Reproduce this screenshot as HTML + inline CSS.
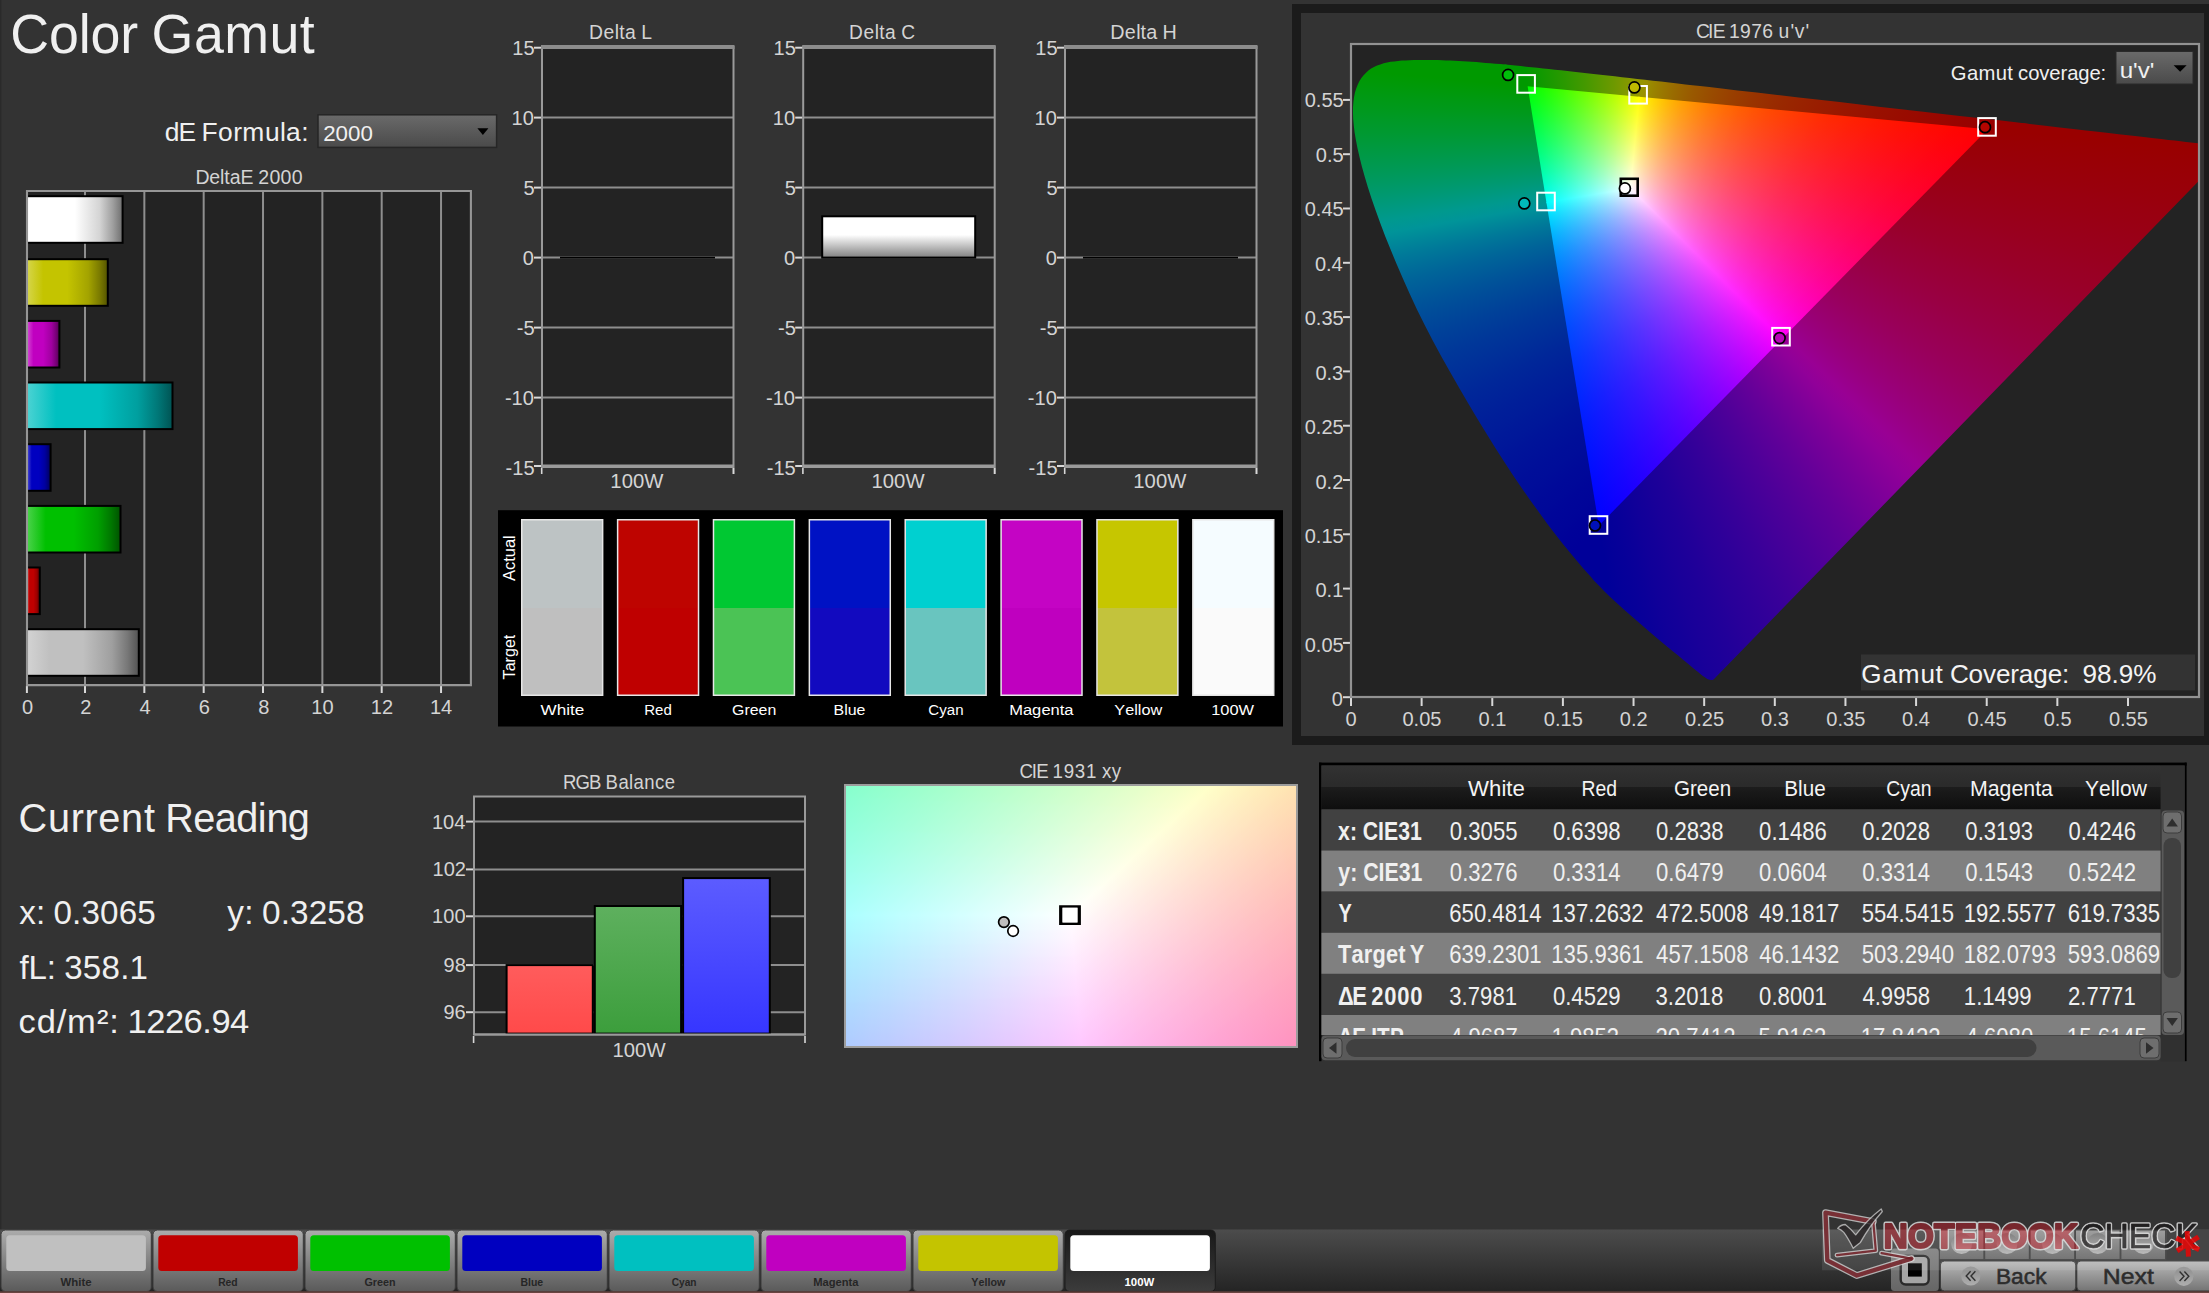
<!DOCTYPE html><html><head><meta charset="utf-8"><title>Color Gamut</title><style>
html,body{margin:0;padding:0;background:#333}
body{width:2209px;height:1293px;position:relative;overflow:hidden;font-family:"Liberation Sans", sans-serif}
svg{position:absolute;left:0;top:0}
svg text{font-family:"Liberation Sans", sans-serif;white-space:pre}
.gl{position:absolute;left:0;top:0;width:100%;height:100%}
</style></head><body>
<svg width="2209" height="1293" viewBox="0 0 2209 1293"><defs><linearGradient id="dd" x1="0" y1="0" x2="0" y2="1"><stop offset="0" stop-color="#6a6a6a"/><stop offset="1" stop-color="#4a4a4a"/></linearGradient><linearGradient id="hb0"><stop offset="0" stop-color="rgb(255,255,255)"/><stop offset="0.2" stop-color="rgb(255,255,255)"/><stop offset="0.5" stop-color="rgb(255,255,255)"/><stop offset="0.76" stop-color="rgb(212,212,212)"/><stop offset="0.9" stop-color="rgb(158,158,158)"/><stop offset="1" stop-color="rgb(110,110,110)"/></linearGradient><linearGradient id="hb1"><stop offset="0" stop-color="rgb(214,214,76)"/><stop offset="0.2" stop-color="rgb(196,196,0)"/><stop offset="0.5" stop-color="rgb(196,196,0)"/><stop offset="0.76" stop-color="rgb(163,163,0)"/><stop offset="0.9" stop-color="rgb(122,122,0)"/><stop offset="1" stop-color="rgb(84,84,0)"/></linearGradient><linearGradient id="hb2"><stop offset="0" stop-color="rgb(211,76,211)"/><stop offset="0.2" stop-color="rgb(192,0,192)"/><stop offset="0.5" stop-color="rgb(192,0,192)"/><stop offset="0.76" stop-color="rgb(159,0,159)"/><stop offset="0.9" stop-color="rgb(119,0,119)"/><stop offset="1" stop-color="rgb(83,0,83)"/></linearGradient><linearGradient id="hb3"><stop offset="0" stop-color="rgb(76,211,211)"/><stop offset="0.2" stop-color="rgb(0,192,192)"/><stop offset="0.5" stop-color="rgb(0,192,192)"/><stop offset="0.76" stop-color="rgb(0,159,159)"/><stop offset="0.9" stop-color="rgb(0,119,119)"/><stop offset="1" stop-color="rgb(0,83,83)"/></linearGradient><linearGradient id="hb4"><stop offset="0" stop-color="rgb(76,76,211)"/><stop offset="0.2" stop-color="rgb(0,0,192)"/><stop offset="0.5" stop-color="rgb(0,0,192)"/><stop offset="0.76" stop-color="rgb(0,0,159)"/><stop offset="0.9" stop-color="rgb(0,0,119)"/><stop offset="1" stop-color="rgb(0,0,83)"/></linearGradient><linearGradient id="hb5"><stop offset="0" stop-color="rgb(76,211,76)"/><stop offset="0.2" stop-color="rgb(0,192,0)"/><stop offset="0.5" stop-color="rgb(0,192,0)"/><stop offset="0.76" stop-color="rgb(0,159,0)"/><stop offset="0.9" stop-color="rgb(0,119,0)"/><stop offset="1" stop-color="rgb(0,83,0)"/></linearGradient><linearGradient id="hb6"><stop offset="0" stop-color="rgb(211,76,76)"/><stop offset="0.2" stop-color="rgb(192,0,0)"/><stop offset="0.5" stop-color="rgb(192,0,0)"/><stop offset="0.76" stop-color="rgb(159,0,0)"/><stop offset="0.9" stop-color="rgb(119,0,0)"/><stop offset="1" stop-color="rgb(83,0,0)"/></linearGradient><linearGradient id="hb7"><stop offset="0" stop-color="rgb(211,211,211)"/><stop offset="0.2" stop-color="rgb(192,192,192)"/><stop offset="0.5" stop-color="rgb(192,192,192)"/><stop offset="0.76" stop-color="rgb(159,159,159)"/><stop offset="0.9" stop-color="rgb(119,119,119)"/><stop offset="1" stop-color="rgb(83,83,83)"/></linearGradient><linearGradient id="vb" x1="0" y1="0" x2="0" y2="1"><stop offset="0" stop-color="#fff"/><stop offset="0.45" stop-color="#fff"/><stop offset="1" stop-color="#808080"/></linearGradient><linearGradient id="rb0" x1="0" y1="0" x2="0" y2="1"><stop offset="0" stop-color="rgb(255,92,92)"/><stop offset="1" stop-color="rgb(255,74,74)"/></linearGradient><linearGradient id="rb1" x1="0" y1="0" x2="0" y2="1"><stop offset="0" stop-color="rgb(94,176,94)"/><stop offset="1" stop-color="rgb(60,158,60)"/></linearGradient><linearGradient id="rb2" x1="0" y1="0" x2="0" y2="1"><stop offset="0" stop-color="rgb(92,92,255)"/><stop offset="1" stop-color="rgb(54,54,255)"/></linearGradient><linearGradient id="th" x1="0" y1="0" x2="0" y2="1"><stop offset="0" stop-color="#323232"/><stop offset="0.5" stop-color="#2a2a2a"/><stop offset="0.5" stop-color="#1c1c1c"/><stop offset="1" stop-color="#0e0e0e"/></linearGradient><linearGradient id="sbv"><stop offset="0" stop-color="#4a4a4a"/><stop offset="1" stop-color="#5c5c5c"/></linearGradient><linearGradient id="bs" x1="0" y1="0" x2="0" y2="1"><stop offset="0" stop-color="#4c4c4c"/><stop offset="1" stop-color="#232323"/></linearGradient><linearGradient id="bb" x1="0" y1="0" x2="0" y2="1"><stop offset="0" stop-color="#acacac"/><stop offset="1" stop-color="#5a5a5a"/></linearGradient><linearGradient id="bsel" x1="0" y1="0" x2="0" y2="1"><stop offset="0" stop-color="#181818"/><stop offset="1" stop-color="#3c3c3c"/></linearGradient><linearGradient id="sg" x1="0" y1="0" x2="0" y2="1"><stop offset="0" stop-color="#969696"/><stop offset="1" stop-color="#686868"/></linearGradient><linearGradient id="sgc" x1="0" y1="0" x2="0" y2="1"><stop offset="0" stop-color="#747474"/><stop offset="1" stop-color="#b4b4b4"/></linearGradient><linearGradient id="nb" x1="0" y1="0" x2="0" y2="1"><stop offset="0" stop-color="#bababa"/><stop offset="1" stop-color="#747474"/></linearGradient><linearGradient id="stp" x1="0" y1="0" x2="0" y2="1"><stop offset="0" stop-color="#808080"/><stop offset="1" stop-color="#666"/></linearGradient><linearGradient id="cg" x1="0" y1="0" x2="0" y2="1"><stop offset="0" stop-color="#8e8e8e"/><stop offset="1" stop-color="#aeaeae"/></linearGradient></defs>
<rect x="0.00" y="0.00" width="1.30" height="1230.00" fill="#2a2a2a"/>
<text transform="scale(0.9763 1)" x="10.6 50.2 80.6 92.8 123.3 141.5 155.2 198.6 229.6 276.0 307.0" y="53.0" font-size="55.02" fill="#f0f0f0">Color Gamut</text>
<text transform="scale(0.9907 1)" x="166.3 180.1 196.6 203.4 220.1 235.4 244.5 267.4 282.6 288.7 304.0" y="140.7" font-size="26.67" fill="#f0f0f0">dE Formula:</text>
<rect x="318.00" y="114.80" width="178.60" height="32.60" fill="url(#dd)" stroke="#262626" stroke-width="1.5"/>
<text transform="scale(0.9772 1)" x="330.7 343.4 356.2 368.9" y="140.7" font-size="22.85" fill="#f0f0f0">2000</text>
<path d="M477.4 128.3h11l-5.5 6.7z" fill="#000"/>
<rect x="27.00" y="191.00" width="443.50" height="494.00" fill="#232323"/>
<path d="M85.00 191.00L85.00 685.00" stroke="#8e8e8e" stroke-width="2.00"/>
<path d="M144.34 191.00L144.34 685.00" stroke="#8e8e8e" stroke-width="2.00"/>
<path d="M203.68 191.00L203.68 685.00" stroke="#8e8e8e" stroke-width="2.00"/>
<path d="M263.02 191.00L263.02 685.00" stroke="#8e8e8e" stroke-width="2.00"/>
<path d="M322.36 191.00L322.36 685.00" stroke="#8e8e8e" stroke-width="2.00"/>
<path d="M381.70 191.00L381.70 685.00" stroke="#8e8e8e" stroke-width="2.00"/>
<path d="M441.04 191.00L441.04 685.00" stroke="#8e8e8e" stroke-width="2.00"/>
<path d="M26.90 686.00L26.90 693.00" stroke="#d8d8d8" stroke-width="2.00"/>
<text transform="scale(0.9772 1)" x="22.6" y="714.2" font-size="20.52" fill="#d4d4d4">0</text>
<path d="M85.00 686.00L85.00 693.00" stroke="#d8d8d8" stroke-width="2.00"/>
<text transform="scale(0.9772 1)" x="82.1" y="714.2" font-size="20.52" fill="#d4d4d4">2</text>
<path d="M144.34 686.00L144.34 693.00" stroke="#d8d8d8" stroke-width="2.00"/>
<text transform="scale(0.9772 1)" x="142.8" y="714.2" font-size="20.52" fill="#d4d4d4">4</text>
<path d="M203.68 686.00L203.68 693.00" stroke="#d8d8d8" stroke-width="2.00"/>
<text transform="scale(0.9772 1)" x="203.4" y="714.2" font-size="20.52" fill="#d4d4d4">6</text>
<path d="M263.02 686.00L263.02 693.00" stroke="#d8d8d8" stroke-width="2.00"/>
<text transform="scale(0.9772 1)" x="264.3" y="714.2" font-size="20.52" fill="#d4d4d4">8</text>
<path d="M322.36 686.00L322.36 693.00" stroke="#d8d8d8" stroke-width="2.00"/>
<text transform="scale(0.9772 1)" x="318.6 330.0" y="714.2" font-size="20.52" fill="#d4d4d4">10</text>
<path d="M381.70 686.00L381.70 693.00" stroke="#d8d8d8" stroke-width="2.00"/>
<text transform="scale(0.9772 1)" x="379.5 390.9" y="714.2" font-size="20.52" fill="#d4d4d4">12</text>
<path d="M441.04 686.00L441.04 693.00" stroke="#d8d8d8" stroke-width="2.00"/>
<text transform="scale(0.9772 1)" x="440.0 451.4" y="714.2" font-size="20.52" fill="#d4d4d4">14</text>
<text transform="scale(0.9519 1)" x="205.3 219.9 231.2 235.7 241.3 252.6 266.1 271.3 283.1 294.8 306.5" y="183.6" font-size="20.52" fill="#d4d4d4">DeltaE 2000</text>
<rect x="27.00" y="196.20" width="95.60" height="46.60" fill="url(#hb0)" stroke="#000" stroke-width="2"/>
<rect x="27.00" y="259.20" width="80.80" height="46.60" fill="url(#hb1)" stroke="#000" stroke-width="2"/>
<rect x="27.00" y="320.90" width="32.40" height="46.60" fill="url(#hb2)" stroke="#000" stroke-width="2"/>
<rect x="27.00" y="382.50" width="145.50" height="46.60" fill="url(#hb3)" stroke="#000" stroke-width="2"/>
<rect x="27.00" y="444.20" width="23.60" height="46.60" fill="url(#hb4)" stroke="#000" stroke-width="2"/>
<rect x="27.00" y="505.90" width="93.50" height="46.60" fill="url(#hb5)" stroke="#000" stroke-width="2"/>
<rect x="27.00" y="567.50" width="12.80" height="46.60" fill="url(#hb6)" stroke="#000" stroke-width="2"/>
<rect x="27.00" y="629.20" width="111.80" height="46.60" fill="url(#hb7)" stroke="#000" stroke-width="2"/>
<path d="M27 191H470.9V685.1H27Z" fill="none" stroke="#969696" stroke-width="2.1"/>
<rect x="542.00" y="47.00" width="191.50" height="420.00" fill="#232323"/>
<path d="M542.00 117.60L733.50 117.60" stroke="#8e8e8e" stroke-width="2.00"/>
<path d="M542.00 187.60L733.50 187.60" stroke="#8e8e8e" stroke-width="2.00"/>
<path d="M542.00 257.60L733.50 257.60" stroke="#8e8e8e" stroke-width="2.00"/>
<path d="M542.00 327.60L733.50 327.60" stroke="#8e8e8e" stroke-width="2.00"/>
<path d="M542.00 397.60L733.50 397.60" stroke="#8e8e8e" stroke-width="2.00"/>
<path d="M542.0 47H733.5V467H542.0Z" fill="none" stroke="#9a9a9a" stroke-width="2"/>
<path d="M541.00 47.00L734.50 47.00" stroke="#8c8c8c" stroke-width="4.00"/>
<path d="M542.00 466.00L733.50 466.00" stroke="#9a9a9a" stroke-width="3.00"/>
<path d="M534.00 47.70L541.00 47.70" stroke="#d8d8d8" stroke-width="2.00"/>
<text transform="scale(0.9772 1)" x="524.3 535.7" y="55.0" font-size="20.52" fill="#d4d4d4">15</text>
<path d="M534.00 117.60L541.00 117.60" stroke="#d8d8d8" stroke-width="2.00"/>
<text transform="scale(0.9772 1)" x="523.5 534.9" y="125.2" font-size="20.52" fill="#d4d4d4">10</text>
<path d="M534.00 187.60L541.00 187.60" stroke="#d8d8d8" stroke-width="2.00"/>
<text transform="scale(0.9772 1)" x="535.7" y="195.2" font-size="20.52" fill="#d4d4d4">5</text>
<path d="M534.00 257.60L541.00 257.60" stroke="#d8d8d8" stroke-width="2.00"/>
<text transform="scale(0.9772 1)" x="534.9" y="265.2" font-size="20.52" fill="#d4d4d4">0</text>
<path d="M534.00 327.60L541.00 327.60" stroke="#d8d8d8" stroke-width="2.00"/>
<text transform="scale(0.9805 1)" x="527.0 533.8" y="335.2" font-size="20.52" fill="#d4d4d4">-5</text>
<path d="M534.00 397.60L541.00 397.60" stroke="#d8d8d8" stroke-width="2.00"/>
<text transform="scale(0.9792 1)" x="515.6 522.4 533.8" y="405.2" font-size="20.52" fill="#d4d4d4">-10</text>
<path d="M534.00 466.00L541.00 466.00" stroke="#d8d8d8" stroke-width="2.00"/>
<text transform="scale(0.9792 1)" x="516.3 523.1 534.5" y="475.0" font-size="20.52" fill="#d4d4d4">-15</text>
<path d="M541.70 468.00L541.70 474.00" stroke="#d8d8d8" stroke-width="1.60"/>
<path d="M733.50 468.00L733.50 474.00" stroke="#d8d8d8" stroke-width="2.00"/>
<text transform="scale(0.9893 1)" x="616.9 628.4 639.8 651.2" y="488.0" font-size="20.52" fill="#d4d4d4">100W</text>
<text transform="scale(0.9444 1)" x="623.7 639.1 651.0 655.8 661.7 673.6 678.9" y="39.2" font-size="20.52" fill="#d4d4d4">Delta L</text>
<path d="M560.00 257.60L715.00 257.60" stroke="#000" stroke-width="1.60"/>
<rect x="803.20" y="47.00" width="191.50" height="420.00" fill="#232323"/>
<path d="M803.20 117.60L994.70 117.60" stroke="#8e8e8e" stroke-width="2.00"/>
<path d="M803.20 187.60L994.70 187.60" stroke="#8e8e8e" stroke-width="2.00"/>
<path d="M803.20 257.60L994.70 257.60" stroke="#8e8e8e" stroke-width="2.00"/>
<path d="M803.20 327.60L994.70 327.60" stroke="#8e8e8e" stroke-width="2.00"/>
<path d="M803.20 397.60L994.70 397.60" stroke="#8e8e8e" stroke-width="2.00"/>
<path d="M803.2 47H994.7V467H803.2Z" fill="none" stroke="#9a9a9a" stroke-width="2"/>
<path d="M802.20 47.00L995.70 47.00" stroke="#8c8c8c" stroke-width="4.00"/>
<path d="M803.20 466.00L994.70 466.00" stroke="#9a9a9a" stroke-width="3.00"/>
<path d="M795.20 47.70L802.20 47.70" stroke="#d8d8d8" stroke-width="2.00"/>
<text transform="scale(0.9772 1)" x="791.5 803.0" y="55.0" font-size="20.52" fill="#d4d4d4">15</text>
<path d="M795.20 117.60L802.20 117.60" stroke="#d8d8d8" stroke-width="2.00"/>
<text transform="scale(0.9772 1)" x="790.8 802.2" y="125.2" font-size="20.52" fill="#d4d4d4">10</text>
<path d="M795.20 187.60L802.20 187.60" stroke="#d8d8d8" stroke-width="2.00"/>
<text transform="scale(0.9772 1)" x="803.0" y="195.2" font-size="20.52" fill="#d4d4d4">5</text>
<path d="M795.20 257.60L802.20 257.60" stroke="#d8d8d8" stroke-width="2.00"/>
<text transform="scale(0.9772 1)" x="802.2" y="265.2" font-size="20.52" fill="#d4d4d4">0</text>
<path d="M795.20 327.60L802.20 327.60" stroke="#d8d8d8" stroke-width="2.00"/>
<text transform="scale(0.9805 1)" x="793.4 800.3" y="335.2" font-size="20.52" fill="#d4d4d4">-5</text>
<path d="M795.20 397.60L802.20 397.60" stroke="#d8d8d8" stroke-width="2.00"/>
<text transform="scale(0.9792 1)" x="782.3 789.1 800.5" y="405.2" font-size="20.52" fill="#d4d4d4">-10</text>
<path d="M795.20 466.00L802.20 466.00" stroke="#d8d8d8" stroke-width="2.00"/>
<text transform="scale(0.9792 1)" x="783.0 789.9 801.3" y="475.0" font-size="20.52" fill="#d4d4d4">-15</text>
<path d="M802.90 468.00L802.90 474.00" stroke="#d8d8d8" stroke-width="1.60"/>
<path d="M994.70 468.00L994.70 474.00" stroke="#d8d8d8" stroke-width="2.00"/>
<text transform="scale(0.9893 1)" x="881.0 892.4 903.8 915.2" y="488.0" font-size="20.52" fill="#d4d4d4">100W</text>
<text transform="scale(0.9337 1)" x="909.3 924.9 937.0 941.8 947.8 959.8 965.2" y="39.2" font-size="20.52" fill="#d4d4d4">Delta C</text>
<rect x="822.2" y="216.3" width="153.0" height="41.3" fill="url(#vb)" stroke="#000" stroke-width="2"/>
<rect x="1065.00" y="47.00" width="191.50" height="420.00" fill="#232323"/>
<path d="M1065.00 117.60L1256.50 117.60" stroke="#8e8e8e" stroke-width="2.00"/>
<path d="M1065.00 187.60L1256.50 187.60" stroke="#8e8e8e" stroke-width="2.00"/>
<path d="M1065.00 257.60L1256.50 257.60" stroke="#8e8e8e" stroke-width="2.00"/>
<path d="M1065.00 327.60L1256.50 327.60" stroke="#8e8e8e" stroke-width="2.00"/>
<path d="M1065.00 397.60L1256.50 397.60" stroke="#8e8e8e" stroke-width="2.00"/>
<path d="M1065.0 47H1256.5V467H1065.0Z" fill="none" stroke="#9a9a9a" stroke-width="2"/>
<path d="M1064.00 47.00L1257.50 47.00" stroke="#8c8c8c" stroke-width="4.00"/>
<path d="M1065.00 466.00L1256.50 466.00" stroke="#9a9a9a" stroke-width="3.00"/>
<path d="M1057.00 47.70L1064.00 47.70" stroke="#d8d8d8" stroke-width="2.00"/>
<text transform="scale(0.9772 1)" x="1059.5 1070.9" y="55.0" font-size="20.52" fill="#d4d4d4">15</text>
<path d="M1057.00 117.60L1064.00 117.60" stroke="#d8d8d8" stroke-width="2.00"/>
<text transform="scale(0.9772 1)" x="1058.7 1070.1" y="125.2" font-size="20.52" fill="#d4d4d4">10</text>
<path d="M1057.00 187.60L1064.00 187.60" stroke="#d8d8d8" stroke-width="2.00"/>
<text transform="scale(0.9772 1)" x="1070.9" y="195.2" font-size="20.52" fill="#d4d4d4">5</text>
<path d="M1057.00 257.60L1064.00 257.60" stroke="#d8d8d8" stroke-width="2.00"/>
<text transform="scale(0.9772 1)" x="1070.1" y="265.2" font-size="20.52" fill="#d4d4d4">0</text>
<path d="M1057.00 327.60L1064.00 327.60" stroke="#d8d8d8" stroke-width="2.00"/>
<text transform="scale(0.9805 1)" x="1060.4 1067.3" y="335.2" font-size="20.52" fill="#d4d4d4">-5</text>
<path d="M1057.00 397.60L1064.00 397.60" stroke="#d8d8d8" stroke-width="2.00"/>
<text transform="scale(0.9792 1)" x="1049.7 1056.5 1067.9" y="405.2" font-size="20.52" fill="#d4d4d4">-10</text>
<path d="M1057.00 466.00L1064.00 466.00" stroke="#d8d8d8" stroke-width="2.00"/>
<text transform="scale(0.9792 1)" x="1050.4 1057.2 1068.7" y="475.0" font-size="20.52" fill="#d4d4d4">-15</text>
<path d="M1064.70 468.00L1064.70 474.00" stroke="#d8d8d8" stroke-width="1.60"/>
<path d="M1256.50 468.00L1256.50 474.00" stroke="#d8d8d8" stroke-width="2.00"/>
<text transform="scale(0.9893 1)" x="1145.6 1157.0 1168.4 1179.8" y="488.0" font-size="20.52" fill="#d4d4d4">100W</text>
<text transform="scale(0.9625 1)" x="1153.5 1168.7 1180.4 1185.0 1190.9 1202.5 1207.7" y="39.2" font-size="20.52" fill="#d4d4d4">Delta H</text>
<path d="M1083.00 257.60L1238.00 257.60" stroke="#000" stroke-width="1.60"/>
<rect x="498.00" y="510.20" width="785.00" height="216.30" fill="#000"/>
<rect x="521.00" y="519.00" width="82.40" height="177.00" fill="#e6e6e6"/>
<rect x="522.50" y="520.50" width="79.40" height="87.50" fill="#bdc3c4"/>
<rect x="522.50" y="608.00" width="79.40" height="86.50" fill="#bfbfbf"/>
<text transform="scale(1.1229 1)" x="481.4 495.8 504.3 507.7 511.9" y="715.0" font-size="15.29" fill="#ffffff">White</text>
<rect x="616.87" y="519.00" width="82.40" height="177.00" fill="#e6e6e6"/>
<rect x="618.37" y="520.50" width="79.40" height="87.50" fill="#be0400"/>
<rect x="618.37" y="608.00" width="79.40" height="86.50" fill="#bf0000"/>
<text transform="scale(0.9823 1)" x="655.9 666.9 675.4" y="715.0" font-size="15.29" fill="#ffffff">Red</text>
<rect x="712.74" y="519.00" width="82.40" height="177.00" fill="#e6e6e6"/>
<rect x="714.24" y="520.50" width="79.40" height="87.50" fill="#00c832"/>
<rect x="714.24" y="608.00" width="79.40" height="86.50" fill="#4bc355"/>
<text transform="scale(1.0414 1)" x="702.9 714.8 719.9 728.4 736.9" y="715.0" font-size="15.29" fill="#ffffff">Green</text>
<rect x="808.61" y="519.00" width="82.40" height="177.00" fill="#e6e6e6"/>
<rect x="810.11" y="520.50" width="79.40" height="87.50" fill="#0012c4"/>
<rect x="810.11" y="608.00" width="79.40" height="86.50" fill="#120abf"/>
<text transform="scale(1.0446 1)" x="797.9 808.1 811.5 820.0" y="715.0" font-size="15.29" fill="#ffffff">Blue</text>
<rect x="904.48" y="519.00" width="82.40" height="177.00" fill="#e6e6e6"/>
<rect x="905.98" y="520.50" width="79.40" height="87.50" fill="#00d0d0"/>
<rect x="905.98" y="608.00" width="79.40" height="86.50" fill="#69c5bf"/>
<text transform="scale(0.9847 1)" x="942.8 953.8 961.5 970.0" y="715.0" font-size="15.29" fill="#ffffff">Cyan</text>
<rect x="1000.35" y="519.00" width="82.40" height="177.00" fill="#e6e6e6"/>
<rect x="1001.85" y="520.50" width="79.40" height="87.50" fill="#c404c4"/>
<rect x="1001.85" y="608.00" width="79.40" height="86.50" fill="#bf00bf"/>
<text transform="scale(1.0802 1)" x="934.3 947.0 955.5 964.1 972.6 981.1 985.3" y="715.0" font-size="15.29" fill="#ffffff">Magenta</text>
<rect x="1096.22" y="519.00" width="82.40" height="177.00" fill="#e6e6e6"/>
<rect x="1097.72" y="520.50" width="79.40" height="87.50" fill="#c6c600"/>
<rect x="1097.72" y="608.00" width="79.40" height="86.50" fill="#c3c33c"/>
<text transform="scale(1.0645 1)" x="1046.8 1057.0 1065.5 1068.9 1072.3 1080.8" y="715.0" font-size="15.29" fill="#ffffff">Yellow</text>
<rect x="1192.09" y="519.00" width="82.40" height="177.00" fill="#e6e6e6"/>
<rect x="1193.59" y="520.50" width="79.40" height="87.50" fill="#f5fcff"/>
<rect x="1193.59" y="608.00" width="79.40" height="86.50" fill="#fafafa"/>
<text transform="scale(1.0738 1)" x="1127.9 1136.4 1144.9 1153.4" y="715.0" font-size="15.29" fill="#ffffff">100W</text>
<text transform="translate(515.2 558.2) rotate(-90)" x="-22.9" y="0" font-size="16.60" textLength="45.8" lengthAdjust="spacingAndGlyphs" fill="#fff">Actual</text>
<text transform="translate(515.2 657.0) rotate(-90)" x="-22.4" y="0" font-size="16.60" textLength="44.7" lengthAdjust="spacingAndGlyphs" fill="#fff">Target</text>
<text transform="scale(0.9892 1)" x="18.6 48.5 71.6 85.4 99.3 122.4 145.5 157.0 167.1 195.4 217.1 238.9 260.6 269.3 291.0" y="831.7" font-size="40.10" fill="#f0f0f0">Current Reading</text>
<text transform="scale(0.9785 1)" x="19.8 36.8 46.2 54.7 73.7 83.2 102.3 121.4 140.4" y="924.1" font-size="33.95" fill="#f0f0f0">x: 0.3065</text>
<text transform="scale(0.9836 1)" x="231.0 248.3 257.9 266.4 285.4 294.8 313.8 332.7 351.7" y="924.1" font-size="33.95" fill="#f0f0f0">y: 0.3258</text>
<text transform="scale(0.9746 1)" x="19.9 29.2 48.0 57.4 65.9 85.0 104.2 123.3 132.9" y="978.9" font-size="33.95" fill="#f0f0f0">fL: 358.1</text>
<text transform="scale(1.0168 1)" x="18.3 36.1 55.9 65.8 95.5 107.4 117.3 125.5 143.8 162.2 180.5 198.8 208.0 226.3" y="1033.3" font-size="33.95" fill="#f0f0f0">cd/m²: 1226.94</text>
<rect x="474.00" y="796.50" width="331.00" height="238.00" fill="#232323"/>
<path d="M474.00 1012.20L805.00 1012.20" stroke="#8e8e8e" stroke-width="2.00"/>
<path d="M466.00 1012.20L473.00 1012.20" stroke="#d8d8d8" stroke-width="2.00"/>
<text transform="scale(0.9772 1)" x="453.8 465.2" y="1019.2" font-size="20.52" fill="#d4d4d4">96</text>
<path d="M474.00 965.10L805.00 965.10" stroke="#8e8e8e" stroke-width="2.00"/>
<path d="M466.00 965.10L473.00 965.10" stroke="#d8d8d8" stroke-width="2.00"/>
<text transform="scale(0.9772 1)" x="453.9 465.3" y="972.1" font-size="20.52" fill="#d4d4d4">98</text>
<path d="M474.00 916.30L805.00 916.30" stroke="#8e8e8e" stroke-width="2.00"/>
<path d="M466.00 916.30L473.00 916.30" stroke="#d8d8d8" stroke-width="2.00"/>
<text transform="scale(0.9772 1)" x="442.2 453.6 465.0" y="923.3" font-size="20.52" fill="#d4d4d4">100</text>
<path d="M474.00 869.40L805.00 869.40" stroke="#8e8e8e" stroke-width="2.00"/>
<path d="M466.00 869.40L473.00 869.40" stroke="#d8d8d8" stroke-width="2.00"/>
<text transform="scale(0.9772 1)" x="442.6 454.0 465.4" y="876.4" font-size="20.52" fill="#d4d4d4">102</text>
<path d="M474.00 821.60L805.00 821.60" stroke="#8e8e8e" stroke-width="2.00"/>
<path d="M466.00 821.60L473.00 821.60" stroke="#d8d8d8" stroke-width="2.00"/>
<text transform="scale(0.9772 1)" x="442.0 453.4 464.8" y="828.6" font-size="20.52" fill="#d4d4d4">104</text>
<path d="M474 796.5H805V1034.6H474Z" fill="none" stroke="#9a9a9a" stroke-width="2"/>
<path d="M473.60 1036.00L473.60 1043.00" stroke="#d8d8d8" stroke-width="1.60"/>
<path d="M805.00 1036.00L805.00 1043.00" stroke="#d8d8d8" stroke-width="1.60"/>
<text transform="scale(0.9893 1)" x="619.2 630.6 642.0 653.5" y="1056.6" font-size="20.52" fill="#d4d4d4">100W</text>
<text transform="scale(0.9047 1)" x="622.3 636.1 651.0 663.8 669.3 683.6 695.4 700.2 712.1 724.0 734.7" y="788.8" font-size="20.52" fill="#d4d4d4">RGB Balance</text>
<rect x="506.6" y="965.1" width="86.2" height="68.5" fill="url(#rb0)" stroke="#000" stroke-width="2"/>
<rect x="594.8" y="906.0" width="86.3" height="127.6" fill="url(#rb1)" stroke="#000" stroke-width="2"/>
<rect x="683.1" y="878.1" width="86.7" height="155.5" fill="url(#rb2)" stroke="#000" stroke-width="2"/>
<path d="M474.00 1034.60L805.00 1034.60" stroke="#9a9a9a" stroke-width="2.00"/>
<rect x="845" y="785" width="452" height="262" fill="none" stroke="#9c9c9c" stroke-width="2"/>
<text transform="scale(0.9131 1)" x="1116.6 1129.9 1135.0 1147.3 1152.7 1164.9 1177.1 1189.3 1201.6 1207.0 1217.7" y="777.7" font-size="20.52" fill="#d4d4d4">CIE 1931 xy</text>
<rect x="1319.00" y="762.60" width="867.60" height="3.00" fill="#000"/>
<rect x="1319.00" y="762.60" width="2.50" height="298.60" fill="#000"/>
<rect x="2184.70" y="762.60" width="1.90" height="298.60" fill="#000"/>
<rect x="2160.60" y="765.40" width="24.10" height="296.00" fill="#303030"/>
<rect x="1321.40" y="765.40" width="839.20" height="44.00" fill="url(#th)"/>
<rect x="1321.40" y="809.40" width="839.20" height="41.12" fill="#414141"/>
<rect x="1321.40" y="850.52" width="839.20" height="41.12" fill="#808080"/>
<rect x="1321.40" y="891.64" width="839.20" height="41.12" fill="#414141"/>
<rect x="1321.40" y="932.76" width="839.20" height="41.12" fill="#808080"/>
<rect x="1321.40" y="973.88" width="839.20" height="41.12" fill="#414141"/>
<rect x="1321.40" y="1015.00" width="839.20" height="20.00" fill="#808080"/>
<text transform="scale(0.9792 1)" x="1499.3 1520.7 1533.3 1538.3 1544.6" y="795.7" font-size="22.66" fill="#f4f4f4">White</text>
<text transform="scale(0.8566 1)" x="1846.2 1862.5 1875.1" y="795.7" font-size="22.66" fill="#f4f4f4">Red</text>
<text transform="scale(0.9081 1)" x="1843.4 1861.0 1868.6 1881.2 1893.8" y="795.7" font-size="22.66" fill="#f4f4f4">Green</text>
<text transform="scale(0.9109 1)" x="1958.9 1974.0 1979.1 1991.7" y="795.7" font-size="22.66" fill="#f4f4f4">Blue</text>
<text transform="scale(0.8587 1)" x="2196.6 2212.9 2224.3 2236.9" y="795.7" font-size="22.66" fill="#f4f4f4">Cyan</text>
<text transform="scale(0.9420 1)" x="2091.2 2110.1 2122.7 2135.3 2147.9 2160.5 2166.8" y="795.7" font-size="22.66" fill="#f4f4f4">Magenta</text>
<text transform="scale(0.9283 1)" x="2246.0 2261.1 2273.7 2278.7 2283.8 2296.4" y="795.7" font-size="22.66" fill="#f4f4f4">Yellow</text>
<clipPath id="tc"><rect x="1321.4" y="809.4" width="839.2" height="225.6"/></clipPath>
<g clip-path="url(#tc)">
<text transform="scale(0.8336 1)" x="1605.2 1619.4 1627.9 1634.8 1653.2 1660.3 1677.3 1691.5" y="840.1" font-size="25.46" fill="#f0f0f0" font-weight="bold">x: CIE31</text>
<text transform="scale(0.8696 1)" x="1667.2 1681.4 1688.4 1702.6 1716.8 1730.9" y="840.1" font-size="25.46" fill="#f0f0f0">0.3055</text>
<text transform="scale(0.8696 1)" x="1785.8 1799.9 1807.0 1821.2 1835.3 1849.5" y="840.1" font-size="25.46" fill="#f0f0f0">0.6398</text>
<text transform="scale(0.8696 1)" x="1904.3 1918.5 1925.6 1939.7 1953.9 1968.0" y="840.1" font-size="25.46" fill="#f0f0f0">0.2838</text>
<text transform="scale(0.8696 1)" x="2022.9 2037.1 2044.1 2058.3 2072.4 2086.6" y="840.1" font-size="25.46" fill="#f0f0f0">0.1486</text>
<text transform="scale(0.8696 1)" x="2141.5 2155.6 2162.7 2176.8 2191.0 2205.2" y="840.1" font-size="25.46" fill="#f0f0f0">0.2028</text>
<text transform="scale(0.8696 1)" x="2260.0 2274.2 2281.3 2295.4 2309.6 2323.7" y="840.1" font-size="25.46" fill="#f0f0f0">0.3193</text>
<text transform="scale(0.8696 1)" x="2378.6 2392.7 2399.8 2414.0 2428.1 2442.3" y="840.1" font-size="25.46" fill="#f0f0f0">0.4246</text>
<text transform="scale(0.8372 1)" x="1598.5 1612.9 1621.5 1628.4 1646.7 1653.8 1670.7 1684.8" y="881.2" font-size="25.46" fill="#f0f0f0" font-weight="bold">y: CIE31</text>
<text transform="scale(0.8696 1)" x="1667.2 1681.4 1688.4 1702.6 1716.8 1730.9" y="881.2" font-size="25.46" fill="#f0f0f0">0.3276</text>
<text transform="scale(0.8696 1)" x="1785.8 1799.9 1807.0 1821.2 1835.3 1849.5" y="881.2" font-size="25.46" fill="#f0f0f0">0.3314</text>
<text transform="scale(0.8696 1)" x="1904.3 1918.5 1925.6 1939.7 1953.9 1968.0" y="881.2" font-size="25.46" fill="#f0f0f0">0.6479</text>
<text transform="scale(0.8696 1)" x="2022.9 2037.1 2044.1 2058.3 2072.4 2086.6" y="881.2" font-size="25.46" fill="#f0f0f0">0.0604</text>
<text transform="scale(0.8696 1)" x="2141.5 2155.6 2162.7 2176.8 2191.0 2205.2" y="881.2" font-size="25.46" fill="#f0f0f0">0.3314</text>
<text transform="scale(0.8696 1)" x="2260.0 2274.2 2281.3 2295.4 2309.6 2323.7" y="881.2" font-size="25.46" fill="#f0f0f0">0.1543</text>
<text transform="scale(0.8696 1)" x="2378.6 2392.7 2399.8 2414.0 2428.1 2442.3" y="881.2" font-size="25.46" fill="#f0f0f0">0.5242</text>
<text transform="scale(0.7863 1)" x="1702.3" y="922.3" font-size="25.46" fill="#f0f0f0" font-weight="bold">Y</text>
<text transform="scale(0.8696 1)" x="1666.6 1680.7 1694.9 1709.0 1716.1 1730.3 1744.4 1758.6" y="922.3" font-size="25.46" fill="#f0f0f0">650.4814</text>
<text transform="scale(0.8696 1)" x="1783.9 1798.1 1812.3 1826.4 1833.5 1847.7 1861.8 1876.0" y="922.3" font-size="25.46" fill="#f0f0f0">137.2632</text>
<text transform="scale(0.8696 1)" x="1904.4 1918.6 1932.8 1946.9 1954.0 1968.2 1982.3 1996.5" y="922.3" font-size="25.46" fill="#f0f0f0">472.5008</text>
<text transform="scale(0.8696 1)" x="2023.1 2037.2 2051.4 2058.4 2072.6 2086.8 2100.9" y="922.3" font-size="25.46" fill="#f0f0f0">49.1817</text>
<text transform="scale(0.8696 1)" x="2140.8 2154.9 2169.1 2183.2 2190.3 2204.5 2218.6 2232.8" y="922.3" font-size="25.46" fill="#f0f0f0">554.5415</text>
<text transform="scale(0.8696 1)" x="2258.2 2272.3 2286.5 2300.6 2307.7 2321.9 2336.0 2350.2" y="922.3" font-size="25.46" fill="#f0f0f0">192.5577</text>
<text transform="scale(0.8696 1)" x="2377.9 2392.0 2406.2 2420.4 2427.4 2441.6 2455.8 2469.9" y="922.3" font-size="25.46" fill="#f0f0f0">619.7335</text>
<text transform="scale(0.8546 1)" x="1565.7 1581.5 1595.9 1605.9 1621.7 1636.1 1642.8 1649.6" y="963.5" font-size="25.46" fill="#f0f0f0" font-weight="bold">Target Y</text>
<text transform="scale(0.8696 1)" x="1666.6 1680.7 1694.9 1709.0 1716.1 1730.3 1744.4 1758.6" y="963.5" font-size="25.46" fill="#f0f0f0">639.2301</text>
<text transform="scale(0.8696 1)" x="1783.9 1798.1 1812.3 1826.4 1833.5 1847.7 1861.8 1876.0" y="963.5" font-size="25.46" fill="#f0f0f0">135.9361</text>
<text transform="scale(0.8696 1)" x="1904.4 1918.6 1932.8 1946.9 1954.0 1968.2 1982.3 1996.5" y="963.5" font-size="25.46" fill="#f0f0f0">457.1508</text>
<text transform="scale(0.8696 1)" x="2023.1 2037.2 2051.4 2058.4 2072.6 2086.8 2100.9" y="963.5" font-size="25.46" fill="#f0f0f0">46.1432</text>
<text transform="scale(0.8696 1)" x="2140.8 2154.9 2169.1 2183.2 2190.3 2204.5 2218.6 2232.8" y="963.5" font-size="25.46" fill="#f0f0f0">503.2940</text>
<text transform="scale(0.8696 1)" x="2258.2 2272.3 2286.5 2300.6 2307.7 2321.9 2336.0 2350.2" y="963.5" font-size="25.46" fill="#f0f0f0">182.0793</text>
<text transform="scale(0.8696 1)" x="2377.9 2392.0 2406.2 2420.3 2427.4 2441.6 2455.7 2469.9" y="963.5" font-size="25.46" fill="#f0f0f0">593.0869</text>
<text transform="scale(0.8617 1)" x="1552.8 1569.3 1584.6 1591.4 1606.5 1621.6 1636.7" y="1004.6" font-size="25.46" fill="#f0f0f0" font-weight="bold">ΔE 2000</text>
<text transform="scale(0.8696 1)" x="1666.6 1680.8 1687.9 1702.0 1716.2 1730.3" y="1004.6" font-size="25.46" fill="#f0f0f0">3.7981</text>
<text transform="scale(0.8696 1)" x="1785.8 1799.9 1807.0 1821.2 1835.3 1849.5" y="1004.6" font-size="25.46" fill="#f0f0f0">0.4529</text>
<text transform="scale(0.8696 1)" x="1903.8 1917.9 1925.0 1939.2 1953.3 1967.5" y="1004.6" font-size="25.46" fill="#f0f0f0">3.2018</text>
<text transform="scale(0.8696 1)" x="2022.9 2037.1 2044.1 2058.3 2072.4 2086.6" y="1004.6" font-size="25.46" fill="#f0f0f0">0.8001</text>
<text transform="scale(0.8696 1)" x="2141.7 2155.9 2162.9 2177.1 2191.3 2205.4" y="1004.6" font-size="25.46" fill="#f0f0f0">4.9958</text>
<text transform="scale(0.8696 1)" x="2258.3 2272.5 2279.6 2293.7 2307.9 2322.0" y="1004.6" font-size="25.46" fill="#f0f0f0">1.1499</text>
<text transform="scale(0.8696 1)" x="2378.1 2392.2 2399.3 2413.4 2427.6 2441.8" y="1004.6" font-size="25.46" fill="#f0f0f0">2.7771</text>
<text transform="scale(0.8107 1)" x="1650.4 1667.9 1684.1 1691.3 1698.6 1714.7" y="1045.7" font-size="25.46" fill="#f0f0f0" font-weight="bold">ΔE ITP</text>
<text transform="scale(0.8696 1)" x="1667.5 1681.6 1688.7 1702.8 1717.0 1731.2" y="1045.7" font-size="25.46" fill="#f0f0f0">4.9687</text>
<text transform="scale(0.8696 1)" x="1784.1 1798.2 1805.3 1819.5 1833.6 1847.8" y="1045.7" font-size="25.46" fill="#f0f0f0">1.9853</text>
<text transform="scale(0.8696 1)" x="1903.7 1917.9 1932.0 1939.1 1953.3 1967.4 1981.6" y="1045.7" font-size="25.46" fill="#f0f0f0">20.7412</text>
<text transform="scale(0.8696 1)" x="2022.3 2036.5 2043.6 2057.7 2071.9 2086.1" y="1045.7" font-size="25.46" fill="#f0f0f0">5.9163</text>
<text transform="scale(0.8696 1)" x="2139.7 2153.8 2168.0 2175.1 2189.2 2203.4 2217.5" y="1045.7" font-size="25.46" fill="#f0f0f0">17.8422</text>
<text transform="scale(0.8696 1)" x="2260.3 2274.4 2281.5 2295.7 2309.8 2324.0" y="1045.7" font-size="25.46" fill="#f0f0f0">4.6080</text>
<text transform="scale(0.8696 1)" x="2376.8 2391.0 2405.1 2412.2 2426.3 2440.5 2454.7" y="1045.7" font-size="25.46" fill="#f0f0f0">15.6145</text>
</g>
<rect x="2161.6" y="810.4" width="22.4" height="224.6" rx="4" fill="#5a5a5a"/>
<rect x="2163" y="812" width="18.5" height="21" rx="4" fill="#6e6e6e" stroke="#3c3c3c" stroke-width="1"/>
<path d="M2166.5 826.5l5.7-8 5.7 8z" fill="#2e2e2e"/>
<rect x="2163" y="1012" width="18.5" height="21" rx="4" fill="#6e6e6e" stroke="#3c3c3c" stroke-width="1"/>
<path d="M2166.5 1018l5.7 8 5.7-8z" fill="#2e2e2e"/>
<rect x="2163.5" y="838" width="17.5" height="140" rx="8" fill="#404040"/>
<rect x="1321.4" y="1035.4" width="839.2" height="24.8" rx="4" fill="#5a5a5a"/>
<rect x="1323" y="1038" width="19" height="20" rx="4" fill="#6e6e6e" stroke="#3c3c3c" stroke-width="1"/>
<path d="M1336.5 1042.3l-7.5 5.7 7.5 5.7z" fill="#2e2e2e"/>
<rect x="2140" y="1038" width="19" height="20" rx="4" fill="#6e6e6e" stroke="#3c3c3c" stroke-width="1"/>
<path d="M2146 1042.3l7.5 5.7-7.5 5.7z" fill="#2e2e2e"/>
<rect x="1346" y="1039" width="690.5" height="18" rx="9" fill="#404040"/>
<rect x="0.00" y="1229.50" width="2209.00" height="63.50" fill="url(#bs)"/>
<rect x="1.0" y="1230" width="150.3" height="61.5" rx="4.5" fill="url(#bb)" stroke="#3a3a3a" stroke-width="1"/>
<rect x="6.3" y="1235.3" width="139.6" height="35.8" rx="3.5" fill="#c0c0c0"/>
<text transform="scale(0.9954 1)" x="60.8 71.6 78.6 81.8 85.6" y="1285.7" font-size="11.47" fill="#262626" font-weight="bold">White</text>
<rect x="153.0" y="1230" width="150.3" height="61.5" rx="4.5" fill="url(#bb)" stroke="#3a3a3a" stroke-width="1"/>
<rect x="158.3" y="1235.3" width="139.6" height="35.8" rx="3.5" fill="#c00000"/>
<text transform="scale(0.9016 1)" x="242.0 250.2 256.6" y="1285.7" font-size="11.47" fill="#262626" font-weight="bold">Red</text>
<rect x="305.0" y="1230" width="150.3" height="61.5" rx="4.5" fill="url(#bb)" stroke="#3a3a3a" stroke-width="1"/>
<rect x="310.3" y="1235.3" width="139.6" height="35.8" rx="3.5" fill="#00c000"/>
<text transform="scale(0.9368 1)" x="389.1 398.0 402.5 408.9 415.3" y="1285.7" font-size="11.47" fill="#262626" font-weight="bold">Green</text>
<rect x="457.0" y="1230" width="150.3" height="61.5" rx="4.5" fill="url(#bb)" stroke="#3a3a3a" stroke-width="1"/>
<rect x="462.3" y="1235.3" width="139.6" height="35.8" rx="3.5" fill="#0000c0"/>
<text transform="scale(0.9136 1)" x="569.6 577.9 581.1 588.1" y="1285.7" font-size="11.47" fill="#262626" font-weight="bold">Blue</text>
<rect x="609.0" y="1230" width="150.3" height="61.5" rx="4.5" fill="url(#bb)" stroke="#3a3a3a" stroke-width="1"/>
<rect x="614.3" y="1235.3" width="139.6" height="35.8" rx="3.5" fill="#00c0c0"/>
<text transform="scale(0.8850 1)" x="759.0 767.3 773.7 780.0" y="1285.7" font-size="11.47" fill="#262626" font-weight="bold">Cyan</text>
<rect x="761.0" y="1230" width="150.3" height="61.5" rx="4.5" fill="url(#bb)" stroke="#3a3a3a" stroke-width="1"/>
<rect x="766.3" y="1235.3" width="139.6" height="35.8" rx="3.5" fill="#c000c0"/>
<text transform="scale(0.9762 1)" x="833.0 842.5 848.9 855.9 862.3 869.3 873.1" y="1285.7" font-size="11.47" fill="#262626" font-weight="bold">Magenta</text>
<rect x="913.0" y="1230" width="150.3" height="61.5" rx="4.5" fill="url(#bb)" stroke="#3a3a3a" stroke-width="1"/>
<rect x="918.3" y="1235.3" width="139.6" height="35.8" rx="3.5" fill="#c4c400"/>
<text transform="scale(0.9354 1)" x="1038.4 1046.0 1052.4 1055.6 1058.8 1065.8" y="1285.7" font-size="11.47" fill="#262626" font-weight="bold">Yellow</text>
<rect x="1065.0" y="1230" width="150.3" height="61.5" rx="4.5" fill="url(#bsel)" stroke="#1c1c1c" stroke-width="1"/>
<rect x="1070.3" y="1235.3" width="139.6" height="35.8" rx="3.5" fill="#ffffff"/>
<text transform="scale(0.9961 1)" x="1129.0 1135.3 1141.7 1148.1" y="1285.7" font-size="11.47" fill="#ffffff" font-weight="bold">100W</text>
<rect x="2166.50" y="1229.50" width="50.00" height="31.00" fill="#333"/>
<rect x="1939.3" y="1230" width="44.6" height="29.6" fill="url(#sg)" stroke="#3c3c3c" stroke-width="1"/>
<circle cx="1961.6" cy="1243.5" r="10.5" fill="url(#sgc)"/>
<rect x="1984.7" y="1230" width="44.6" height="29.6" fill="url(#sg)" stroke="#3c3c3c" stroke-width="1"/>
<circle cx="2007.0" cy="1243.5" r="10.5" fill="url(#sgc)"/>
<rect x="2030.1" y="1230" width="44.6" height="29.6" fill="url(#sg)" stroke="#3c3c3c" stroke-width="1"/>
<circle cx="2052.4" cy="1243.5" r="10.5" fill="url(#sgc)"/>
<rect x="2075.5" y="1230" width="44.6" height="29.6" fill="url(#sg)" stroke="#3c3c3c" stroke-width="1"/>
<circle cx="2097.8" cy="1243.5" r="10.5" fill="url(#sgc)"/>
<rect x="2120.9" y="1230" width="44.6" height="29.6" fill="url(#sg)" stroke="#3c3c3c" stroke-width="1"/>
<circle cx="2143.2" cy="1243.5" r="10.5" fill="url(#sgc)"/>
<rect x="1891" y="1248.6" width="47.8" height="42.4" rx="3.5" fill="url(#stp)"/>
<rect x="1900.7" y="1255.9" width="28" height="28.6" rx="5" fill="#a4a4a4" stroke="#2a2a2a" stroke-width="2.4"/>
<rect x="1908.00" y="1263.30" width="13.80" height="13.30" fill="#000"/>
<rect x="1940.4" y="1261" width="135.4" height="30" rx="4" fill="url(#nb)" stroke="#3a3a3a" stroke-width="1"/>
<rect x="2076.8" y="1261" width="140" height="30" rx="4" fill="url(#nb)" stroke="#3a3a3a" stroke-width="1"/>
<circle cx="1970.8" cy="1276" r="9.6" fill="url(#cg)"/><circle cx="2183.8" cy="1276.3" r="9.6" fill="url(#cg)"/>
<path d="M1970.6 1271.3l-4.4 4.7 4.4 4.7M1975.4 1271.3l-4.4 4.7 4.4 4.7" fill="none" stroke="#303030" stroke-width="1.4"/>
<path d="M2179.6 1271.6l4.4 4.7-4.4 4.7M2184.4 1271.6l4.4 4.7-4.4 4.7" fill="none" stroke="#303030" stroke-width="1.4"/>
<text transform="scale(1.0601 1)" x="1882.8 1897.1 1909.1 1919.8" y="1283.7" font-size="21.45" fill="#2c2c2c" stroke="#2c2c2c" stroke-width="0.5">Back</text>
<text transform="scale(1.1336 1)" x="1854.9 1870.8 1882.9 1893.9" y="1283.8" font-size="21.92" fill="#2c2c2c" stroke="#2c2c2c" stroke-width="0.5">Next</text>
<rect x="0.00" y="1291.40" width="2209.00" height="1.60" fill="#6a4440"/>
<rect x="1292.00" y="4.00" width="925.00" height="741.00" fill="#1b1b1b"/>
<rect x="1301.00" y="13.00" width="903.00" height="723.00" fill="#333333"/>
<rect x="1351.00" y="44.00" width="848.00" height="653.00" fill="#232323"/>
<text transform="scale(0.9422 1)" x="1800.0 1812.8 1817.8 1829.7 1835.0 1846.8 1858.6 1870.5 1882.3 1887.6 1900.4 1904.8 1916.3" y="38.3" font-size="20.52" fill="#d4d4d4">CIE 1976 u'v'</text>
<path d="M1351.00 698.00L1351.00 706.00" stroke="#d8d8d8" stroke-width="2.00"/>
<text transform="scale(0.9772 1)" x="1376.8" y="725.6" font-size="20.52" fill="#d4d4d4">0</text>
<path d="M1343.00 697.20L1350.00 697.20" stroke="#d8d8d8" stroke-width="2.00"/>
<text transform="scale(0.9772 1)" x="1362.9" y="706.5" font-size="20.52" fill="#d4d4d4">0</text>
<path d="M1421.63 698.00L1421.63 706.00" stroke="#d8d8d8" stroke-width="2.00"/>
<text transform="scale(0.9768 1)" x="1435.8 1447.2 1452.9 1464.3" y="725.6" font-size="20.52" fill="#d4d4d4">0.05</text>
<path d="M1343.00 642.90L1350.00 642.90" stroke="#d8d8d8" stroke-width="2.00"/>
<text transform="scale(0.9768 1)" x="1335.7 1347.1 1352.8 1364.2" y="652.0" font-size="20.52" fill="#d4d4d4">0.05</text>
<path d="M1492.27 698.00L1492.27 706.00" stroke="#d8d8d8" stroke-width="2.00"/>
<text transform="scale(0.9766 1)" x="1513.9 1525.4 1531.1" y="725.6" font-size="20.52" fill="#d4d4d4">0.1</text>
<path d="M1343.00 588.60L1350.00 588.60" stroke="#d8d8d8" stroke-width="2.00"/>
<text transform="scale(0.9766 1)" x="1347.0 1358.4 1364.1" y="597.5" font-size="20.52" fill="#d4d4d4">0.1</text>
<path d="M1562.90 698.00L1562.90 706.00" stroke="#d8d8d8" stroke-width="2.00"/>
<text transform="scale(0.9768 1)" x="1580.5 1591.9 1597.6 1609.0" y="725.6" font-size="20.52" fill="#d4d4d4">0.15</text>
<path d="M1343.00 534.30L1350.00 534.30" stroke="#d8d8d8" stroke-width="2.00"/>
<text transform="scale(0.9768 1)" x="1335.7 1347.1 1352.8 1364.2" y="543.1" font-size="20.52" fill="#d4d4d4">0.15</text>
<path d="M1633.54 698.00L1633.54 706.00" stroke="#d8d8d8" stroke-width="2.00"/>
<text transform="scale(0.9766 1)" x="1658.6 1670.0 1675.7" y="725.6" font-size="20.52" fill="#d4d4d4">0.2</text>
<path d="M1343.00 480.00L1350.00 480.00" stroke="#d8d8d8" stroke-width="2.00"/>
<text transform="scale(0.9766 1)" x="1347.0 1358.4 1364.1" y="488.6" font-size="20.52" fill="#d4d4d4">0.2</text>
<path d="M1704.17 698.00L1704.17 706.00" stroke="#d8d8d8" stroke-width="2.00"/>
<text transform="scale(0.9768 1)" x="1725.1 1736.5 1742.2 1753.6" y="725.6" font-size="20.52" fill="#d4d4d4">0.25</text>
<path d="M1343.00 425.70L1350.00 425.70" stroke="#d8d8d8" stroke-width="2.00"/>
<text transform="scale(0.9768 1)" x="1335.7 1347.1 1352.8 1364.2" y="434.1" font-size="20.52" fill="#d4d4d4">0.25</text>
<path d="M1774.81 698.00L1774.81 706.00" stroke="#d8d8d8" stroke-width="2.00"/>
<text transform="scale(0.9766 1)" x="1803.2 1814.6 1820.3" y="725.6" font-size="20.52" fill="#d4d4d4">0.3</text>
<path d="M1343.00 371.40L1350.00 371.40" stroke="#d8d8d8" stroke-width="2.00"/>
<text transform="scale(0.9766 1)" x="1346.9 1358.3 1364.0" y="379.6" font-size="20.52" fill="#d4d4d4">0.3</text>
<path d="M1845.45 698.00L1845.45 706.00" stroke="#d8d8d8" stroke-width="2.00"/>
<text transform="scale(0.9768 1)" x="1869.7 1881.1 1886.8 1898.2" y="725.6" font-size="20.52" fill="#d4d4d4">0.35</text>
<path d="M1343.00 317.10L1350.00 317.10" stroke="#d8d8d8" stroke-width="2.00"/>
<text transform="scale(0.9768 1)" x="1335.7 1347.1 1352.8 1364.2" y="325.1" font-size="20.52" fill="#d4d4d4">0.35</text>
<path d="M1916.08 698.00L1916.08 706.00" stroke="#d8d8d8" stroke-width="2.00"/>
<text transform="scale(0.9766 1)" x="1947.6 1959.0 1964.7" y="725.6" font-size="20.52" fill="#d4d4d4">0.4</text>
<path d="M1343.00 262.80L1350.00 262.80" stroke="#d8d8d8" stroke-width="2.00"/>
<text transform="scale(0.9766 1)" x="1346.4 1357.8 1363.5" y="270.7" font-size="20.52" fill="#d4d4d4">0.4</text>
<path d="M1986.72 698.00L1986.72 706.00" stroke="#d8d8d8" stroke-width="2.00"/>
<text transform="scale(0.9768 1)" x="2014.3 2025.7 2031.4 2042.9" y="725.6" font-size="20.52" fill="#d4d4d4">0.45</text>
<path d="M1343.00 208.50L1350.00 208.50" stroke="#d8d8d8" stroke-width="2.00"/>
<text transform="scale(0.9768 1)" x="1335.7 1347.1 1352.8 1364.2" y="216.2" font-size="20.52" fill="#d4d4d4">0.45</text>
<path d="M2057.35 698.00L2057.35 706.00" stroke="#d8d8d8" stroke-width="2.00"/>
<text transform="scale(0.9766 1)" x="2092.7 2104.1 2109.8" y="725.6" font-size="20.52" fill="#d4d4d4">0.5</text>
<path d="M1343.00 154.20L1350.00 154.20" stroke="#d8d8d8" stroke-width="2.00"/>
<text transform="scale(0.9766 1)" x="1347.3 1358.8 1364.5" y="161.7" font-size="20.52" fill="#d4d4d4">0.5</text>
<path d="M2127.99 698.00L2127.99 706.00" stroke="#d8d8d8" stroke-width="2.00"/>
<text transform="scale(0.9768 1)" x="2159.0 2170.4 2176.1 2187.5" y="725.6" font-size="20.52" fill="#d4d4d4">0.55</text>
<path d="M1343.00 99.90L1350.00 99.90" stroke="#d8d8d8" stroke-width="2.00"/>
<text transform="scale(0.9768 1)" x="1335.7 1347.1 1352.8 1364.2" y="107.2" font-size="20.52" fill="#d4d4d4">0.55</text>
</svg>
<div style="position:absolute;left:1352px;top:45px;width:846px;height:651px;overflow:hidden"><div class="gl" style="clip-path:polygon(361.8px 634.2px,361.6px 634.3px,361.4px 634.5px,361.2px 634.7px,360.8px 634.9px,360.2px 634.9px,359.5px 634.9px,358.7px 634.9px,357.7px 634.7px,356.6px 634.4px,355.3px 633.9px,353.9px 633.1px,352.5px 632.1px,350.9px 630.9px,349.0px 629.4px,346.7px 627.6px,344.1px 625.5px,341.3px 623.2px,338.1px 620.5px,334.5px 617.5px,330.5px 614.2px,326.2px 610.6px,321.4px 606.7px,316.2px 602.5px,310.5px 597.8px,304.2px 592.5px,296.9px 586.3px,288.6px 579.1px,279.9px 571.6px,271.6px 564.3px,264.2px 557.6px,258.2px 551.9px,253.0px 547.0px,248.3px 542.1px,243.3px 536.9px,237.7px 530.6px,231.3px 523.4px,224.6px 515.5px,217.5px 507.1px,210.1px 498.0px,202.5px 488.2px,194.7px 477.9px,186.6px 466.8px,178.2px 455.2px,169.7px 443.0px,161.0px 430.2px,152.2px 416.8px,143.2px 402.7px,134.1px 388.1px,124.9px 373.1px,116.0px 358.1px,107.1px 342.8px,98.1px 327.1px,89.2px 311.3px,80.7px 295.5px,72.7px 280.0px,65.1px 264.7px,57.9px 249.3px,51.1px 234.1px,44.7px 219.3px,38.8px 205.1px,33.3px 191.5px,28.3px 178.2px,23.7px 165.5px,19.5px 153.4px,15.8px 142.0px,12.6px 131.3px,9.8px 121.3px,7.5px 112.0px,5.5px 103.2px,3.9px 95.0px,2.6px 87.4px,1.8px 80.4px,1.2px 74.0px,1.0px 68.0px,1.0px 62.3px,1.4px 57.0px,2.0px 52.2px,2.9px 47.8px,4.1px 43.7px,5.6px 39.9px,7.2px 36.4px,9.2px 33.2px,11.4px 30.4px,13.8px 27.9px,16.4px 25.6px,19.1px 23.6px,22.0px 22.0px,25.1px 20.6px,28.3px 19.4px,31.7px 18.3px,35.1px 17.5px,38.7px 16.8px,42.3px 16.4px,46.1px 16.0px,49.9px 15.6px,53.7px 15.4px,57.7px 15.2px,61.7px 15.1px,65.7px 15.0px,69.7px 15.0px,73.7px 15.0px,77.7px 15.0px,81.7px 15.0px,85.8px 15.1px,89.9px 15.2px,94.0px 15.4px,98.2px 15.5px,102.3px 15.7px,106.6px 16.0px,110.9px 16.2px,115.3px 16.5px,119.8px 16.8px,124.3px 17.1px,128.9px 17.5px,133.6px 17.9px,138.3px 18.3px,143.2px 18.7px,148.1px 19.1px,153.1px 19.6px,158.2px 20.1px,163.4px 20.6px,168.7px 21.1px,174.1px 21.7px,179.6px 22.2px,185.3px 22.8px,191.0px 23.4px,196.9px 24.0px,202.9px 24.7px,209.0px 25.3px,215.3px 26.0px,221.7px 26.7px,228.2px 27.4px,234.8px 28.2px,241.5px 28.9px,248.5px 29.7px,255.5px 30.5px,262.7px 31.3px,270.1px 32.2px,277.6px 33.0px,285.2px 33.9px,293.0px 34.8px,300.9px 35.7px,309.0px 36.6px,317.2px 37.5px,325.6px 38.5px,333.3px 39.4px,340.3px 40.2px,348.0px 41.1px,357.3px 42.1px,369.6px 43.6px,385.7px 45.4px,404.7px 47.6px,425.4px 50.0px,446.7px 52.4px,467.3px 54.8px,487.6px 57.1px,508.1px 59.5px,528.8px 61.9px,549.2px 64.2px,569.0px 66.5px,588.4px 68.7px,607.7px 70.9px,626.6px 73.1px,644.7px 75.1px,661.8px 77.1px,677.9px 78.9px,693.2px 80.7px,707.6px 82.4px,721.2px 84.0px,734.0px 85.4px,745.8px 86.8px,756.6px 88.0px,766.7px 89.2px,776.1px 90.3px,785.2px 91.3px,793.8px 92.3px,801.8px 93.2px,809.2px 94.1px,816.2px 94.9px,822.7px 95.6px,828.6px 96.3px,833.9px 96.9px,838.8px 97.5px,843.2px 98.0px,847.3px 98.4px,850.9px 98.8px,854.0px 99.2px,856.7px 99.5px,859.3px 99.8px,862.0px 100.1px,864.8px 100.4px,867.6px 100.8px,870.3px 101.1px,872.7px 101.3px,874.7px 101.6px,876.3px 101.8px,877.5px 101.9px,878.4px 102.0px,879.1px 102.1px,879.7px 102.2px)"><div class="gl" style="clip-path:polygon(279.3px 143.3px,-3838.7px -3949.2px,-987.1px 13635.5px);background:conic-gradient(from 164.45deg at 635.7px 84.3px,rgb(0,0,153) 60.00deg,rgb(0,1,153) 60.78deg,rgb(0,2,153) 61.57deg,rgb(0,4,153) 62.38deg,rgb(0,5,153) 63.21deg,rgb(0,6,153) 64.05deg,rgb(0,8,153) 64.90deg,rgb(0,9,153) 65.78deg,rgb(0,11,153) 66.67deg,rgb(0,13,153) 67.57deg,rgb(0,14,153) 68.49deg,rgb(0,16,153) 69.43deg,rgb(0,18,153) 70.38deg,rgb(0,20,153) 71.35deg,rgb(0,23,153) 72.33deg,rgb(0,25,153) 73.33deg,rgb(0,28,153) 74.35deg,rgb(0,30,153) 75.37deg,rgb(0,33,153) 76.42deg,rgb(0,36,153) 77.47deg,rgb(0,39,153) 78.54deg,rgb(0,43,153) 79.63deg,rgb(0,47,153) 80.72deg,rgb(0,51,153) 81.83deg,rgb(0,55,153) 82.95deg,rgb(0,60,153) 84.08deg,rgb(0,65,153) 85.22deg,rgb(0,71,153) 86.37deg,rgb(0,77,153) 87.52deg,rgb(0,84,153) 88.69deg,rgb(0,92,153) 89.86deg,rgb(0,100,153) 91.03deg,rgb(0,110,153) 92.21deg,rgb(0,121,153) 93.40deg,rgb(0,134,153) 94.58deg,rgb(0,148,153) 95.77deg,rgb(0,153,142) 96.96deg,rgb(0,153,127) 98.14deg,rgb(0,153,112) 99.33deg,rgb(0,153,98) 100.51deg,rgb(0,153,85) 101.69deg,rgb(0,153,73) 102.87deg,rgb(0,153,61) 104.04deg,rgb(0,153,49) 105.20deg,rgb(0,153,39) 106.36deg,rgb(0,153,28) 107.50deg,rgb(0,153,19) 108.64deg,rgb(0,153,9) 109.77deg,rgb(0,153,0) 110.89deg)"></div><div class="gl" style="clip-path:polygon(278.2px 144.4px,14573.6px -2226.3px,-3839.7px -3947.9px);background:conic-gradient(from 290.79deg at 246.8px 480.7px,rgb(0,153,0) 60.00deg,rgb(10,153,0) 61.21deg,rgb(21,153,0) 62.42deg,rgb(32,153,0) 63.65deg,rgb(43,153,0) 64.89deg,rgb(56,153,0) 66.14deg,rgb(68,153,0) 67.40deg,rgb(82,153,0) 68.66deg,rgb(96,153,0) 69.93deg,rgb(110,153,0) 71.21deg,rgb(126,153,0) 72.48deg,rgb(142,153,0) 73.76deg,rgb(153,147,0) 75.04deg,rgb(153,132,0) 76.32deg,rgb(153,119,0) 77.60deg,rgb(153,108,0) 78.87deg,rgb(153,98,0) 80.15deg,rgb(153,89,0) 81.41deg,rgb(153,82,0) 82.67deg,rgb(153,75,0) 83.92deg,rgb(153,69,0) 85.16deg,rgb(153,63,0) 86.39deg,rgb(153,58,0) 87.61deg,rgb(153,53,0) 88.82deg,rgb(153,49,0) 90.02deg,rgb(153,45,0) 91.20deg,rgb(153,41,0) 92.37deg,rgb(153,38,0) 93.52deg,rgb(153,35,0) 94.66deg,rgb(153,32,0) 95.78deg,rgb(153,29,0) 96.88deg,rgb(153,27,0) 97.97deg,rgb(153,24,0) 99.04deg,rgb(153,22,0) 100.09deg,rgb(153,20,0) 101.12deg,rgb(153,18,0) 102.14deg,rgb(153,16,0) 103.14deg,rgb(153,15,0) 104.11deg,rgb(153,13,0) 105.07deg,rgb(153,11,0) 106.01deg,rgb(153,10,0) 106.94deg,rgb(153,8,0) 107.84deg,rgb(153,7,0) 108.73deg,rgb(153,6,0) 109.59deg,rgb(153,4,0) 110.44deg,rgb(153,3,0) 111.27deg,rgb(153,2,0) 112.09deg,rgb(153,1,0) 112.88deg,rgb(153,0,0) 113.66deg)"></div><div class="gl" style="clip-path:polygon(277.7px 142.9px,14569.6px -2227.3px,-988.4px 13631.3px);background:conic-gradient(from 35.34deg at 175.6px 41.3px,rgb(153,0,0) 60.00deg,rgb(153,0,3) 61.13deg,rgb(153,0,6) 62.30deg,rgb(153,0,9) 63.50deg,rgb(153,0,12) 64.74deg,rgb(153,0,16) 66.02deg,rgb(153,0,19) 67.34deg,rgb(153,0,23) 68.69deg,rgb(153,0,27) 70.09deg,rgb(153,0,31) 71.52deg,rgb(153,0,36) 72.99deg,rgb(153,0,40) 74.50deg,rgb(153,0,45) 76.04deg,rgb(153,0,51) 77.63deg,rgb(153,0,56) 79.24deg,rgb(153,0,62) 80.90deg,rgb(153,0,68) 82.58deg,rgb(153,0,75) 84.29deg,rgb(153,0,82) 86.03deg,rgb(153,0,89) 87.80deg,rgb(153,0,97) 89.59deg,rgb(153,0,106) 91.39deg,rgb(153,0,115) 93.22deg,rgb(153,0,125) 95.05deg,rgb(153,0,136) 96.89deg,rgb(153,0,148) 98.74deg,rgb(145,0,153) 100.59deg,rgb(134,0,153) 102.43deg,rgb(123,0,153) 104.27deg,rgb(113,0,153) 106.10deg,rgb(103,0,153) 107.91deg,rgb(94,0,153) 109.71deg,rgb(86,0,153) 111.48deg,rgb(78,0,153) 113.24deg,rgb(71,0,153) 114.96deg,rgb(64,0,153) 116.66deg,rgb(57,0,153) 118.32deg,rgb(51,0,153) 119.95deg,rgb(45,0,153) 121.55deg,rgb(40,0,153) 123.11deg,rgb(34,0,153) 124.63deg,rgb(29,0,153) 126.12deg,rgb(25,0,153) 127.57deg,rgb(20,0,153) 128.98deg,rgb(16,0,153) 130.35deg,rgb(11,0,153) 131.68deg,rgb(7,0,153) 132.97deg,rgb(4,0,153) 134.23deg,rgb(0,0,153) 135.45deg)"></div><div class="gl" style="clip-path:polygon(635.7px 84.3px,175.6px 41.3px,246.8px 480.7px)"><div class="gl" style="clip-path:polygon(277.7px 143.9px,286.4px 50.9px,637.5px 83.7px,429.9px 295.2px);background:conic-gradient(from 305.36deg at 246.8px 480.7px,rgb(255,255,0) 60.00deg,rgb(255,234,0) 60.97deg,rgb(255,216,0) 61.94deg,rgb(255,200,0) 62.91deg,rgb(255,185,0) 63.87deg,rgb(255,172,0) 64.84deg,rgb(255,160,0) 65.80deg,rgb(255,150,0) 66.76deg,rgb(255,140,0) 67.71deg,rgb(255,131,0) 68.66deg,rgb(255,122,0) 69.61deg,rgb(255,115,0) 70.55deg,rgb(255,107,0) 71.48deg,rgb(255,101,0) 72.41deg,rgb(255,94,0) 73.33deg,rgb(255,89,0) 74.25deg,rgb(255,83,0) 75.15deg,rgb(255,78,0) 76.05deg,rgb(255,73,0) 76.95deg,rgb(255,69,0) 77.83deg,rgb(255,65,0) 78.70deg,rgb(255,61,0) 79.57deg,rgb(255,57,0) 80.43deg,rgb(255,53,0) 81.27deg,rgb(255,50,0) 82.11deg,rgb(255,46,0) 82.94deg,rgb(255,43,0) 83.75deg,rgb(255,40,0) 84.56deg,rgb(255,38,0) 85.36deg,rgb(255,35,0) 86.14deg,rgb(255,32,0) 86.92deg,rgb(255,30,0) 87.69deg,rgb(255,28,0) 88.44deg,rgb(255,25,0) 89.19deg,rgb(255,23,0) 89.92deg,rgb(255,21,0) 90.64deg,rgb(255,19,0) 91.35deg,rgb(255,17,0) 92.06deg,rgb(255,15,0) 92.75deg,rgb(255,14,0) 93.43deg,rgb(255,12,0) 94.10deg,rgb(255,10,0) 94.76deg,rgb(255,9,0) 95.41deg,rgb(255,7,0) 96.05deg,rgb(255,5,0) 96.67deg,rgb(255,4,0) 97.29deg,rgb(255,3,0) 97.90deg,rgb(255,1,0) 98.50deg,rgb(255,0,0) 99.09deg),conic-gradient(from 35.34deg at 175.6px 41.3px,rgb(0,0,0) 60.00deg,rgb(0,0,3) 60.59deg,rgb(0,0,5) 61.20deg,rgb(0,0,8) 61.81deg,rgb(0,0,10) 62.44deg,rgb(0,0,13) 63.07deg,rgb(0,0,16) 63.71deg,rgb(0,0,19) 64.37deg,rgb(0,0,22) 65.04deg,rgb(0,0,25) 65.71deg,rgb(0,0,28) 66.40deg,rgb(0,0,31) 67.10deg,rgb(0,0,35) 67.81deg,rgb(0,0,38) 68.53deg,rgb(0,0,41) 69.26deg,rgb(0,0,45) 70.00deg,rgb(0,0,49) 70.75deg,rgb(0,0,52) 71.51deg,rgb(0,0,56) 72.29deg,rgb(0,0,60) 73.07deg,rgb(0,0,64) 73.86deg,rgb(0,0,68) 74.67deg,rgb(0,0,73) 75.49deg,rgb(0,0,77) 76.31deg,rgb(0,0,82) 77.15deg,rgb(0,0,86) 77.99deg,rgb(0,0,91) 78.85deg,rgb(0,0,96) 79.72deg,rgb(0,0,101) 80.59deg,rgb(0,0,107) 81.47deg,rgb(0,0,112) 82.37deg,rgb(0,0,118) 83.27deg,rgb(0,0,124) 84.18deg,rgb(0,0,130) 85.09deg,rgb(0,0,136) 86.02deg,rgb(0,0,143) 86.95deg,rgb(0,0,149) 87.89deg,rgb(0,0,156) 88.83deg,rgb(0,0,164) 89.78deg,rgb(0,0,171) 90.74deg,rgb(0,0,179) 91.70deg,rgb(0,0,187) 92.66deg,rgb(0,0,196) 93.63deg,rgb(0,0,204) 94.60deg,rgb(0,0,214) 95.57deg,rgb(0,0,223) 96.55deg,rgb(0,0,233) 97.52deg,rgb(0,0,244) 98.50deg,rgb(0,0,255) 99.48deg) #000;background-blend-mode:lighten"></div><div class="gl" style="clip-path:polygon(279.2px 144.3px,193.8px 158.4px,174.6px 40.4px,288.0px 51.0px);background:conic-gradient(from 290.79deg at 246.8px 480.7px,rgb(0,255,0) 60.00deg,rgb(4,255,0) 60.29deg,rgb(8,255,0) 60.58deg,rgb(12,255,0) 60.88deg,rgb(16,255,0) 61.17deg,rgb(21,255,0) 61.46deg,rgb(25,255,0) 61.76deg,rgb(29,255,0) 62.05deg,rgb(34,255,0) 62.35deg,rgb(38,255,0) 62.65deg,rgb(42,255,0) 62.94deg,rgb(47,255,0) 63.24deg,rgb(51,255,0) 63.54deg,rgb(56,255,0) 63.84deg,rgb(61,255,0) 64.14deg,rgb(65,255,0) 64.44deg,rgb(70,255,0) 64.74deg,rgb(75,255,0) 65.04deg,rgb(80,255,0) 65.34deg,rgb(85,255,0) 65.65deg,rgb(90,255,0) 65.95deg,rgb(95,255,0) 66.25deg,rgb(100,255,0) 66.56deg,rgb(105,255,0) 66.86deg,rgb(110,255,0) 67.17deg,rgb(115,255,0) 67.47deg,rgb(120,255,0) 67.78deg,rgb(126,255,0) 68.08deg,rgb(131,255,0) 68.39deg,rgb(137,255,0) 68.70deg,rgb(142,255,0) 69.01deg,rgb(148,255,0) 69.31deg,rgb(154,255,0) 69.62deg,rgb(159,255,0) 69.93deg,rgb(165,255,0) 70.24deg,rgb(171,255,0) 70.55deg,rgb(177,255,0) 70.85deg,rgb(183,255,0) 71.16deg,rgb(189,255,0) 71.47deg,rgb(195,255,0) 71.78deg,rgb(202,255,0) 72.09deg,rgb(208,255,0) 72.40deg,rgb(215,255,0) 72.71deg,rgb(221,255,0) 73.02deg,rgb(228,255,0) 73.33deg,rgb(234,255,0) 73.64deg,rgb(241,255,0) 73.95deg,rgb(248,255,0) 74.26deg,rgb(255,255,0) 74.57deg),conic-gradient(from 200.58deg at 635.7px 84.3px,rgb(0,0,255) 60.00deg,rgb(0,0,248) 60.31deg,rgb(0,0,241) 60.63deg,rgb(0,0,234) 60.94deg,rgb(0,0,227) 61.26deg,rgb(0,0,220) 61.57deg,rgb(0,0,214) 61.88deg,rgb(0,0,207) 62.20deg,rgb(0,0,200) 62.51deg,rgb(0,0,194) 62.83deg,rgb(0,0,188) 63.14deg,rgb(0,0,182) 63.45deg,rgb(0,0,175) 63.77deg,rgb(0,0,169) 64.08deg,rgb(0,0,163) 64.39deg,rgb(0,0,158) 64.70deg,rgb(0,0,152) 65.01deg,rgb(0,0,146) 65.33deg,rgb(0,0,140) 65.64deg,rgb(0,0,135) 65.95deg,rgb(0,0,129) 66.26deg,rgb(0,0,124) 66.57deg,rgb(0,0,119) 66.88deg,rgb(0,0,113) 67.19deg,rgb(0,0,108) 67.50deg,rgb(0,0,103) 67.81deg,rgb(0,0,98) 68.12deg,rgb(0,0,93) 68.43deg,rgb(0,0,88) 68.73deg,rgb(0,0,83) 69.04deg,rgb(0,0,78) 69.35deg,rgb(0,0,73) 69.65deg,rgb(0,0,69) 69.96deg,rgb(0,0,64) 70.26deg,rgb(0,0,59) 70.57deg,rgb(0,0,55) 70.87deg,rgb(0,0,50) 71.17deg,rgb(0,0,46) 71.48deg,rgb(0,0,41) 71.78deg,rgb(0,0,37) 72.08deg,rgb(0,0,33) 72.38deg,rgb(0,0,28) 72.68deg,rgb(0,0,24) 72.98deg,rgb(0,0,20) 73.28deg,rgb(0,0,16) 73.57deg,rgb(0,0,12) 73.87deg,rgb(0,0,8) 74.17deg,rgb(0,0,4) 74.46deg,rgb(0,0,0) 74.76deg) #000;background-blend-mode:lighten"></div><div class="gl" style="clip-path:polygon(278.8px 142.7px,431.1px 294.1px,246.3px 482.4px,193.5px 156.9px);background:conic-gradient(from 74.82deg at 175.6px 41.3px,rgb(255,0,255) 60.00deg,rgb(245,0,255) 60.87deg,rgb(236,0,255) 61.74deg,rgb(226,0,255) 62.61deg,rgb(218,0,255) 63.48deg,rgb(209,0,255) 64.34deg,rgb(201,0,255) 65.20deg,rgb(193,0,255) 66.07deg,rgb(185,0,255) 66.92deg,rgb(178,0,255) 67.78deg,rgb(170,0,255) 68.63deg,rgb(163,0,255) 69.48deg,rgb(156,0,255) 70.32deg,rgb(150,0,255) 71.16deg,rgb(143,0,255) 71.99deg,rgb(137,0,255) 72.82deg,rgb(131,0,255) 73.64deg,rgb(125,0,255) 74.46deg,rgb(120,0,255) 75.27deg,rgb(114,0,255) 76.07deg,rgb(109,0,255) 76.87deg,rgb(103,0,255) 77.66deg,rgb(98,0,255) 78.44deg,rgb(93,0,255) 79.22deg,rgb(88,0,255) 79.99deg,rgb(83,0,255) 80.75deg,rgb(79,0,255) 81.50deg,rgb(74,0,255) 82.25deg,rgb(70,0,255) 82.98deg,rgb(66,0,255) 83.71deg,rgb(61,0,255) 84.43deg,rgb(57,0,255) 85.15deg,rgb(53,0,255) 85.85deg,rgb(49,0,255) 86.55deg,rgb(46,0,255) 87.24deg,rgb(42,0,255) 87.92deg,rgb(38,0,255) 88.59deg,rgb(35,0,255) 89.25deg,rgb(31,0,255) 89.90deg,rgb(28,0,255) 90.55deg,rgb(24,0,255) 91.18deg,rgb(21,0,255) 91.81deg,rgb(18,0,255) 92.43deg,rgb(15,0,255) 93.04deg,rgb(12,0,255) 93.64deg,rgb(9,0,255) 94.24deg,rgb(6,0,255) 94.82deg,rgb(3,0,255) 95.40deg,rgb(0,0,255) 95.97deg),conic-gradient(from 164.45deg at 635.7px 84.3px,rgb(0,0,0) 60.00deg,rgb(0,1,0) 60.57deg,rgb(0,3,0) 61.15deg,rgb(0,4,0) 61.74deg,rgb(0,6,0) 62.33deg,rgb(0,8,0) 62.94deg,rgb(0,9,0) 63.55deg,rgb(0,11,0) 64.17deg,rgb(0,13,0) 64.80deg,rgb(0,15,0) 65.44deg,rgb(0,17,0) 66.09deg,rgb(0,19,0) 66.75deg,rgb(0,21,0) 67.41deg,rgb(0,23,0) 68.09deg,rgb(0,25,0) 68.77deg,rgb(0,27,0) 69.46deg,rgb(0,30,0) 70.16deg,rgb(0,32,0) 70.87deg,rgb(0,35,0) 71.58deg,rgb(0,38,0) 72.31deg,rgb(0,41,0) 73.04deg,rgb(0,44,0) 73.78deg,rgb(0,47,0) 74.53deg,rgb(0,50,0) 75.29deg,rgb(0,53,0) 76.05deg,rgb(0,57,0) 76.83deg,rgb(0,61,0) 77.61deg,rgb(0,65,0) 78.39deg,rgb(0,69,0) 79.19deg,rgb(0,73,0) 79.99deg,rgb(0,78,0) 80.80deg,rgb(0,83,0) 81.61deg,rgb(0,88,0) 82.43deg,rgb(0,94,0) 83.26deg,rgb(0,100,0) 84.09deg,rgb(0,106,0) 84.93deg,rgb(0,113,0) 85.77deg,rgb(0,120,0) 86.62deg,rgb(0,128,0) 87.47deg,rgb(0,136,0) 88.32deg,rgb(0,145,0) 89.18deg,rgb(0,155,0) 90.04deg,rgb(0,166,0) 90.91deg,rgb(0,177,0) 91.77deg,rgb(0,190,0) 92.64deg,rgb(0,204,0) 93.51deg,rgb(0,219,0) 94.39deg,rgb(0,236,0) 95.26deg,rgb(0,255,0) 96.13deg) #000;background-blend-mode:lighten"></div></div></div></div>
<div style="position:absolute;left:846px;top:786px;width:450px;height:260px;overflow:hidden;background:#fff"><div class="gl" style="clip-path:polygon(3233.4px 124.0px,107.4px -1253.0px,-1271.7px 1501.0px)"><div class="gl" style="clip-path:polygon(223.6px 128.7px,1204.3px -770.7px,3235.7px 124.1px,299.2px 1021.7px);background:conic-gradient(from 347.48deg at -1271.7px 1501.0px,rgb(255,255,0) 60.00deg,rgb(255,253,0) 60.09deg,rgb(255,251,0) 60.17deg,rgb(255,250,0) 60.26deg,rgb(255,248,0) 60.35deg,rgb(255,246,0) 60.43deg,rgb(255,244,0) 60.52deg,rgb(255,243,0) 60.60deg,rgb(255,241,0) 60.69deg,rgb(255,239,0) 60.77deg,rgb(255,238,0) 60.86deg,rgb(255,236,0) 60.95deg,rgb(255,234,0) 61.03deg,rgb(255,233,0) 61.12deg,rgb(255,231,0) 61.20deg,rgb(255,230,0) 61.29deg,rgb(255,228,0) 61.37deg,rgb(255,226,0) 61.45deg,rgb(255,225,0) 61.54deg,rgb(255,223,0) 61.62deg,rgb(255,222,0) 61.71deg,rgb(255,220,0) 61.79deg,rgb(255,219,0) 61.88deg,rgb(255,217,0) 61.96deg,rgb(255,216,0) 62.04deg,rgb(255,214,0) 62.13deg,rgb(255,213,0) 62.21deg,rgb(255,211,0) 62.29deg,rgb(255,210,0) 62.38deg,rgb(255,209,0) 62.46deg,rgb(255,207,0) 62.54deg,rgb(255,206,0) 62.63deg,rgb(255,204,0) 62.71deg,rgb(255,203,0) 62.79deg,rgb(255,202,0) 62.88deg,rgb(255,200,0) 62.96deg,rgb(255,199,0) 63.04deg,rgb(255,198,0) 63.12deg,rgb(255,196,0) 63.20deg,rgb(255,195,0) 63.29deg,rgb(255,194,0) 63.37deg,rgb(255,192,0) 63.45deg,rgb(255,191,0) 63.53deg,rgb(255,190,0) 63.61deg,rgb(255,189,0) 63.70deg,rgb(255,187,0) 63.78deg,rgb(255,186,0) 63.86deg,rgb(255,185,0) 63.94deg,rgb(255,184,0) 64.02deg,rgb(255,182,0) 64.10deg,rgb(255,181,0) 64.18deg,rgb(255,180,0) 64.26deg,rgb(255,179,0) 64.34deg,rgb(255,178,0) 64.42deg,rgb(255,177,0) 64.50deg,rgb(255,175,0) 64.58deg,rgb(255,174,0) 64.66deg,rgb(255,173,0) 64.74deg,rgb(255,172,0) 64.82deg,rgb(255,171,0) 64.90deg,rgb(255,170,0) 64.98deg,rgb(255,169,0) 65.06deg,rgb(255,167,0) 65.14deg,rgb(255,166,0) 65.22deg,rgb(255,165,0) 65.30deg,rgb(255,164,0) 65.38deg,rgb(255,163,0) 65.46deg,rgb(255,162,0) 65.53deg,rgb(255,161,0) 65.61deg,rgb(255,160,0) 65.69deg,rgb(255,159,0) 65.77deg,rgb(255,158,0) 65.85deg,rgb(255,157,0) 65.93deg,rgb(255,156,0) 66.00deg,rgb(255,155,0) 66.08deg,rgb(255,154,0) 66.16deg,rgb(255,153,0) 66.24deg,rgb(255,152,0) 66.31deg,rgb(255,151,0) 66.39deg,rgb(255,150,0) 66.47deg,rgb(255,149,0) 66.55deg,rgb(255,148,0) 66.62deg,rgb(255,147,0) 66.70deg,rgb(255,146,0) 66.78deg,rgb(255,145,0) 66.85deg,rgb(255,144,0) 66.93deg,rgb(255,143,0) 67.01deg,rgb(255,142,0) 67.08deg,rgb(255,141,0) 67.16deg,rgb(255,140,0) 67.23deg,rgb(255,140,0) 67.31deg,rgb(255,139,0) 67.39deg,rgb(255,138,0) 67.46deg,rgb(255,137,0) 67.54deg,rgb(255,136,0) 67.61deg,rgb(255,135,0) 67.69deg,rgb(255,134,0) 67.76deg,rgb(255,133,0) 67.84deg,rgb(255,132,0) 67.91deg,rgb(255,132,0) 67.99deg,rgb(255,131,0) 68.06deg,rgb(255,130,0) 68.14deg,rgb(255,129,0) 68.21deg,rgb(255,128,0) 68.29deg,rgb(255,127,0) 68.36deg,rgb(255,127,0) 68.43deg,rgb(255,126,0) 68.51deg,rgb(255,125,0) 68.58deg,rgb(255,124,0) 68.66deg,rgb(255,123,0) 68.73deg,rgb(255,123,0) 68.80deg,rgb(255,122,0) 68.88deg,rgb(255,121,0) 68.95deg,rgb(255,120,0) 69.02deg,rgb(255,119,0) 69.10deg,rgb(255,119,0) 69.17deg,rgb(255,118,0) 69.24deg,rgb(255,117,0) 69.31deg,rgb(255,116,0) 69.39deg,rgb(255,116,0) 69.46deg,rgb(255,115,0) 69.53deg,rgb(255,114,0) 69.60deg,rgb(255,113,0) 69.68deg,rgb(255,113,0) 69.75deg,rgb(255,112,0) 69.82deg,rgb(255,111,0) 69.89deg,rgb(255,110,0) 69.96deg,rgb(255,110,0) 70.03deg,rgb(255,109,0) 70.11deg,rgb(255,108,0) 70.18deg,rgb(255,108,0) 70.25deg,rgb(255,107,0) 70.32deg,rgb(255,106,0) 70.39deg,rgb(255,105,0) 70.46deg,rgb(255,105,0) 70.53deg,rgb(255,104,0) 70.60deg,rgb(255,103,0) 70.67deg,rgb(255,103,0) 70.74deg,rgb(255,102,0) 70.81deg,rgb(255,101,0) 70.88deg,rgb(255,101,0) 70.95deg,rgb(255,100,0) 71.02deg,rgb(255,99,0) 71.09deg,rgb(255,99,0) 71.16deg,rgb(255,98,0) 71.23deg,rgb(255,97,0) 71.30deg,rgb(255,97,0) 71.37deg,rgb(255,96,0) 71.44deg,rgb(255,95,0) 71.51deg,rgb(255,95,0) 71.58deg,rgb(255,94,0) 71.64deg,rgb(255,93,0) 71.71deg,rgb(255,93,0) 71.78deg,rgb(255,92,0) 71.85deg,rgb(255,92,0) 71.92deg,rgb(255,91,0) 71.99deg,rgb(255,90,0) 72.05deg,rgb(255,90,0) 72.12deg,rgb(255,89,0) 72.19deg,rgb(255,89,0) 72.26deg,rgb(255,88,0) 72.33deg,rgb(255,87,0) 72.39deg,rgb(255,87,0) 72.46deg,rgb(255,86,0) 72.53deg,rgb(255,86,0) 72.59deg,rgb(255,85,0) 72.66deg,rgb(255,84,0) 72.73deg,rgb(255,84,0) 72.80deg,rgb(255,83,0) 72.86deg,rgb(255,83,0) 72.93deg,rgb(255,82,0) 73.00deg,rgb(255,82,0) 73.06deg,rgb(255,81,0) 73.13deg,rgb(255,80,0) 73.19deg,rgb(255,80,0) 73.26deg,rgb(255,79,0) 73.33deg,rgb(255,79,0) 73.39deg,rgb(255,78,0) 73.46deg,rgb(255,78,0) 73.52deg,rgb(255,77,0) 73.59deg,rgb(255,77,0) 73.65deg,rgb(255,76,0) 73.72deg,rgb(255,75,0) 73.78deg,rgb(255,75,0) 73.85deg,rgb(255,74,0) 73.91deg,rgb(255,74,0) 73.98deg,rgb(255,73,0) 74.04deg,rgb(255,73,0) 74.11deg,rgb(255,72,0) 74.17deg,rgb(255,72,0) 74.24deg,rgb(255,71,0) 74.30deg,rgb(255,71,0) 74.36deg,rgb(255,70,0) 74.43deg,rgb(255,70,0) 74.49deg,rgb(255,69,0) 74.56deg,rgb(255,69,0) 74.62deg,rgb(255,68,0) 74.68deg,rgb(255,68,0) 74.75deg,rgb(255,67,0) 74.81deg,rgb(255,67,0) 74.87deg,rgb(255,66,0) 74.94deg,rgb(255,66,0) 75.00deg,rgb(255,65,0) 75.06deg,rgb(255,65,0) 75.12deg,rgb(255,64,0) 75.19deg,rgb(255,64,0) 75.25deg,rgb(255,63,0) 75.31deg,rgb(255,63,0) 75.37deg,rgb(255,62,0) 75.44deg,rgb(255,62,0) 75.50deg,rgb(255,61,0) 75.56deg,rgb(255,61,0) 75.62deg,rgb(255,61,0) 75.68deg,rgb(255,60,0) 75.74deg,rgb(255,60,0) 75.81deg,rgb(255,59,0) 75.87deg,rgb(255,59,0) 75.93deg,rgb(255,58,0) 75.99deg,rgb(255,58,0) 76.05deg,rgb(255,57,0) 76.11deg,rgb(255,57,0) 76.17deg,rgb(255,56,0) 76.23deg,rgb(255,56,0) 76.29deg,rgb(255,56,0) 76.35deg,rgb(255,55,0) 76.42deg,rgb(255,55,0) 76.48deg,rgb(255,54,0) 76.54deg,rgb(255,54,0) 76.60deg,rgb(255,53,0) 76.66deg,rgb(255,53,0) 76.72deg,rgb(255,53,0) 76.78deg,rgb(255,52,0) 76.84deg,rgb(255,52,0) 76.89deg,rgb(255,51,0) 76.95deg,rgb(255,51,0) 77.01deg,rgb(255,50,0) 77.07deg,rgb(255,50,0) 77.13deg,rgb(255,50,0) 77.19deg,rgb(255,49,0) 77.25deg,rgb(255,49,0) 77.31deg,rgb(255,48,0) 77.37deg,rgb(255,48,0) 77.43deg,rgb(255,48,0) 77.48deg,rgb(255,47,0) 77.54deg,rgb(255,47,0) 77.60deg,rgb(255,46,0) 77.66deg,rgb(255,46,0) 77.72deg,rgb(255,46,0) 77.78deg,rgb(255,45,0) 77.83deg,rgb(255,45,0) 77.89deg,rgb(255,44,0) 77.95deg,rgb(255,44,0) 78.01deg,rgb(255,44,0) 78.06deg,rgb(255,43,0) 78.12deg,rgb(255,43,0) 78.18deg,rgb(255,42,0) 78.24deg,rgb(255,42,0) 78.29deg,rgb(255,42,0) 78.35deg,rgb(255,41,0) 78.41deg,rgb(255,41,0) 78.46deg,rgb(255,41,0) 78.52deg,rgb(255,40,0) 78.58deg,rgb(255,40,0) 78.63deg,rgb(255,39,0) 78.69deg,rgb(255,39,0) 78.75deg,rgb(255,39,0) 78.80deg,rgb(255,38,0) 78.86deg,rgb(255,38,0) 78.91deg,rgb(255,38,0) 78.97deg,rgb(255,37,0) 79.03deg,rgb(255,37,0) 79.08deg,rgb(255,37,0) 79.14deg,rgb(255,36,0) 79.19deg,rgb(255,36,0) 79.25deg,rgb(255,35,0) 79.30deg,rgb(255,35,0) 79.36deg,rgb(255,35,0) 79.41deg,rgb(255,34,0) 79.47deg,rgb(255,34,0) 79.52deg,rgb(255,34,0) 79.58deg,rgb(255,33,0) 79.63deg,rgb(255,33,0) 79.69deg,rgb(255,33,0) 79.74deg,rgb(255,32,0) 79.80deg,rgb(255,32,0) 79.85deg,rgb(255,32,0) 79.90deg,rgb(255,31,0) 79.96deg,rgb(255,31,0) 80.01deg,rgb(255,31,0) 80.07deg,rgb(255,30,0) 80.12deg,rgb(255,30,0) 80.17deg,rgb(255,30,0) 80.23deg,rgb(255,29,0) 80.28deg,rgb(255,29,0) 80.33deg,rgb(255,29,0) 80.39deg,rgb(255,28,0) 80.44deg,rgb(255,28,0) 80.49deg,rgb(255,28,0) 80.55deg,rgb(255,27,0) 80.60deg,rgb(255,27,0) 80.65deg,rgb(255,27,0) 80.71deg,rgb(255,26,0) 80.76deg,rgb(255,26,0) 80.81deg,rgb(255,26,0) 80.86deg,rgb(255,25,0) 80.92deg,rgb(255,25,0) 80.97deg,rgb(255,25,0) 81.02deg,rgb(255,25,0) 81.07deg,rgb(255,24,0) 81.12deg,rgb(255,24,0) 81.18deg,rgb(255,24,0) 81.23deg,rgb(255,23,0) 81.28deg,rgb(255,23,0) 81.33deg,rgb(255,23,0) 81.38deg,rgb(255,22,0) 81.43deg,rgb(255,22,0) 81.48deg,rgb(255,22,0) 81.54deg,rgb(255,21,0) 81.59deg,rgb(255,21,0) 81.64deg,rgb(255,21,0) 81.69deg,rgb(255,21,0) 81.74deg,rgb(255,20,0) 81.79deg,rgb(255,20,0) 81.84deg,rgb(255,20,0) 81.89deg,rgb(255,19,0) 81.94deg,rgb(255,19,0) 81.99deg,rgb(255,19,0) 82.04deg,rgb(255,19,0) 82.09deg,rgb(255,18,0) 82.14deg,rgb(255,18,0) 82.19deg,rgb(255,18,0) 82.24deg,rgb(255,17,0) 82.29deg,rgb(255,17,0) 82.34deg,rgb(255,17,0) 82.39deg,rgb(255,17,0) 82.44deg,rgb(255,16,0) 82.49deg,rgb(255,16,0) 82.54deg,rgb(255,16,0) 82.59deg,rgb(255,15,0) 82.64deg,rgb(255,15,0) 82.69deg,rgb(255,15,0) 82.74deg,rgb(255,15,0) 82.79deg,rgb(255,14,0) 82.84deg,rgb(255,14,0) 82.88deg,rgb(255,14,0) 82.93deg,rgb(255,14,0) 82.98deg,rgb(255,13,0) 83.03deg,rgb(255,13,0) 83.08deg,rgb(255,13,0) 83.13deg,rgb(255,12,0) 83.18deg,rgb(255,12,0) 83.22deg,rgb(255,12,0) 83.27deg,rgb(255,12,0) 83.32deg,rgb(255,11,0) 83.37deg,rgb(255,11,0) 83.42deg,rgb(255,11,0) 83.46deg,rgb(255,11,0) 83.51deg,rgb(255,10,0) 83.56deg,rgb(255,10,0) 83.61deg,rgb(255,10,0) 83.65deg,rgb(255,10,0) 83.70deg,rgb(255,9,0) 83.75deg,rgb(255,9,0) 83.80deg,rgb(255,9,0) 83.84deg,rgb(255,9,0) 83.89deg,rgb(255,8,0) 83.94deg,rgb(255,8,0) 83.98deg,rgb(255,8,0) 84.03deg,rgb(255,8,0) 84.08deg,rgb(255,7,0) 84.12deg,rgb(255,7,0) 84.17deg,rgb(255,7,0) 84.22deg,rgb(255,7,0) 84.26deg,rgb(255,6,0) 84.31deg,rgb(255,6,0) 84.35deg,rgb(255,6,0) 84.40deg,rgb(255,6,0) 84.45deg,rgb(255,5,0) 84.49deg,rgb(255,5,0) 84.54deg,rgb(255,5,0) 84.58deg,rgb(255,5,0) 84.63deg,rgb(255,4,0) 84.68deg,rgb(255,4,0) 84.72deg,rgb(255,4,0) 84.77deg,rgb(255,4,0) 84.81deg,rgb(255,3,0) 84.86deg,rgb(255,3,0) 84.90deg,rgb(255,3,0) 84.95deg,rgb(255,3,0) 84.99deg,rgb(255,3,0) 85.04deg,rgb(255,2,0) 85.08deg,rgb(255,2,0) 85.13deg,rgb(255,2,0) 85.17deg,rgb(255,2,0) 85.22deg,rgb(255,1,0) 85.26deg,rgb(255,1,0) 85.31deg,rgb(255,1,0) 85.35deg,rgb(255,1,0) 85.39deg,rgb(255,0,0) 85.44deg,rgb(255,0,0) 85.48deg,rgb(255,0,0) 85.53deg),conic-gradient(from 53.77deg at 107.4px -1253.0px,rgb(0,0,0) 60.00deg,rgb(0,0,0) 60.08deg,rgb(0,0,0) 60.17deg,rgb(0,0,1) 60.25deg,rgb(0,0,1) 60.34deg,rgb(0,0,1) 60.42deg,rgb(0,0,1) 60.51deg,rgb(0,0,2) 60.60deg,rgb(0,0,2) 60.68deg,rgb(0,0,2) 60.77deg,rgb(0,0,2) 60.85deg,rgb(0,0,2) 60.94deg,rgb(0,0,3) 61.03deg,rgb(0,0,3) 61.12deg,rgb(0,0,3) 61.20deg,rgb(0,0,3) 61.29deg,rgb(0,0,4) 61.38deg,rgb(0,0,4) 61.47deg,rgb(0,0,4) 61.56deg,rgb(0,0,4) 61.65deg,rgb(0,0,5) 61.74deg,rgb(0,0,5) 61.83deg,rgb(0,0,5) 61.92deg,rgb(0,0,5) 62.01deg,rgb(0,0,6) 62.10deg,rgb(0,0,6) 62.19deg,rgb(0,0,6) 62.28deg,rgb(0,0,6) 62.38deg,rgb(0,0,7) 62.47deg,rgb(0,0,7) 62.56deg,rgb(0,0,7) 62.65deg,rgb(0,0,7) 62.75deg,rgb(0,0,8) 62.84deg,rgb(0,0,8) 62.93deg,rgb(0,0,8) 63.03deg,rgb(0,0,8) 63.12deg,rgb(0,0,9) 63.22deg,rgb(0,0,9) 63.31deg,rgb(0,0,9) 63.41deg,rgb(0,0,9) 63.50deg,rgb(0,0,10) 63.60deg,rgb(0,0,10) 63.70deg,rgb(0,0,10) 63.79deg,rgb(0,0,10) 63.89deg,rgb(0,0,11) 63.99deg,rgb(0,0,11) 64.09deg,rgb(0,0,11) 64.18deg,rgb(0,0,11) 64.28deg,rgb(0,0,12) 64.38deg,rgb(0,0,12) 64.48deg,rgb(0,0,12) 64.58deg,rgb(0,0,12) 64.68deg,rgb(0,0,13) 64.78deg,rgb(0,0,13) 64.88deg,rgb(0,0,13) 64.98deg,rgb(0,0,13) 65.08deg,rgb(0,0,14) 65.18deg,rgb(0,0,14) 65.29deg,rgb(0,0,14) 65.39deg,rgb(0,0,15) 65.49deg,rgb(0,0,15) 65.59deg,rgb(0,0,15) 65.70deg,rgb(0,0,15) 65.80deg,rgb(0,0,16) 65.91deg,rgb(0,0,16) 66.01deg,rgb(0,0,16) 66.11deg,rgb(0,0,16) 66.22deg,rgb(0,0,17) 66.33deg,rgb(0,0,17) 66.43deg,rgb(0,0,17) 66.54deg,rgb(0,0,18) 66.64deg,rgb(0,0,18) 66.75deg,rgb(0,0,18) 66.86deg,rgb(0,0,18) 66.97deg,rgb(0,0,19) 67.07deg,rgb(0,0,19) 67.18deg,rgb(0,0,19) 67.29deg,rgb(0,0,20) 67.40deg,rgb(0,0,20) 67.51deg,rgb(0,0,20) 67.62deg,rgb(0,0,20) 67.73deg,rgb(0,0,21) 67.84deg,rgb(0,0,21) 67.95deg,rgb(0,0,21) 68.06deg,rgb(0,0,22) 68.18deg,rgb(0,0,22) 68.29deg,rgb(0,0,22) 68.40deg,rgb(0,0,23) 68.51deg,rgb(0,0,23) 68.63deg,rgb(0,0,23) 68.74deg,rgb(0,0,23) 68.85deg,rgb(0,0,24) 68.97deg,rgb(0,0,24) 69.08deg,rgb(0,0,24) 69.20deg,rgb(0,0,25) 69.31deg,rgb(0,0,25) 69.43deg,rgb(0,0,25) 69.55deg,rgb(0,0,26) 69.66deg,rgb(0,0,26) 69.78deg,rgb(0,0,26) 69.90deg,rgb(0,0,27) 70.02deg,rgb(0,0,27) 70.14deg,rgb(0,0,27) 70.25deg,rgb(0,0,28) 70.37deg,rgb(0,0,28) 70.49deg,rgb(0,0,28) 70.61deg,rgb(0,0,28) 70.73deg,rgb(0,0,29) 70.85deg,rgb(0,0,29) 70.98deg,rgb(0,0,29) 71.10deg,rgb(0,0,30) 71.22deg,rgb(0,0,30) 71.34deg,rgb(0,0,30) 71.47deg,rgb(0,0,31) 71.59deg,rgb(0,0,31) 71.71deg,rgb(0,0,31) 71.84deg,rgb(0,0,32) 71.96deg,rgb(0,0,32) 72.09deg,rgb(0,0,32) 72.21deg,rgb(0,0,33) 72.34deg,rgb(0,0,33) 72.46deg,rgb(0,0,34) 72.59deg,rgb(0,0,34) 72.72deg,rgb(0,0,34) 72.84deg,rgb(0,0,35) 72.97deg,rgb(0,0,35) 73.10deg,rgb(0,0,35) 73.23deg,rgb(0,0,36) 73.36deg,rgb(0,0,36) 73.49deg,rgb(0,0,36) 73.62deg,rgb(0,0,37) 73.75deg,rgb(0,0,37) 73.88deg,rgb(0,0,37) 74.01deg,rgb(0,0,38) 74.14deg,rgb(0,0,38) 74.27deg,rgb(0,0,38) 74.41deg,rgb(0,0,39) 74.54deg,rgb(0,0,39) 74.67deg,rgb(0,0,40) 74.81deg,rgb(0,0,40) 74.94deg,rgb(0,0,40) 75.08deg,rgb(0,0,41) 75.21deg,rgb(0,0,41) 75.35deg,rgb(0,0,41) 75.48deg,rgb(0,0,42) 75.62deg,rgb(0,0,42) 75.76deg,rgb(0,0,43) 75.89deg,rgb(0,0,43) 76.03deg,rgb(0,0,43) 76.17deg,rgb(0,0,44) 76.31deg,rgb(0,0,44) 76.45deg,rgb(0,0,45) 76.59deg,rgb(0,0,45) 76.73deg,rgb(0,0,45) 76.87deg,rgb(0,0,46) 77.01deg,rgb(0,0,46) 77.15deg,rgb(0,0,47) 77.29deg,rgb(0,0,47) 77.43deg,rgb(0,0,47) 77.57deg,rgb(0,0,48) 77.72deg,rgb(0,0,48) 77.86deg,rgb(0,0,49) 78.00deg,rgb(0,0,49) 78.15deg,rgb(0,0,49) 78.29deg,rgb(0,0,50) 78.44deg,rgb(0,0,50) 78.58deg,rgb(0,0,51) 78.73deg,rgb(0,0,51) 78.88deg,rgb(0,0,51) 79.02deg,rgb(0,0,52) 79.17deg,rgb(0,0,52) 79.32deg,rgb(0,0,53) 79.47deg,rgb(0,0,53) 79.62deg,rgb(0,0,54) 79.76deg,rgb(0,0,54) 79.91deg,rgb(0,0,54) 80.06deg,rgb(0,0,55) 80.21deg,rgb(0,0,55) 80.36deg,rgb(0,0,56) 80.52deg,rgb(0,0,56) 80.67deg,rgb(0,0,57) 80.82deg,rgb(0,0,57) 80.97deg,rgb(0,0,58) 81.13deg,rgb(0,0,58) 81.28deg,rgb(0,0,58) 81.43deg,rgb(0,0,59) 81.59deg,rgb(0,0,59) 81.74deg,rgb(0,0,60) 81.90deg,rgb(0,0,60) 82.05deg,rgb(0,0,61) 82.21deg,rgb(0,0,61) 82.37deg,rgb(0,0,62) 82.52deg,rgb(0,0,62) 82.68deg,rgb(0,0,63) 82.84deg,rgb(0,0,63) 83.00deg,rgb(0,0,64) 83.16deg,rgb(0,0,64) 83.31deg,rgb(0,0,64) 83.47deg,rgb(0,0,65) 83.63deg,rgb(0,0,65) 83.79deg,rgb(0,0,66) 83.96deg,rgb(0,0,66) 84.12deg,rgb(0,0,67) 84.28deg,rgb(0,0,67) 84.44deg,rgb(0,0,68) 84.60deg,rgb(0,0,68) 84.77deg,rgb(0,0,69) 84.93deg,rgb(0,0,69) 85.09deg,rgb(0,0,70) 85.26deg,rgb(0,0,70) 85.42deg,rgb(0,0,71) 85.59deg,rgb(0,0,71) 85.75deg,rgb(0,0,72) 85.92deg,rgb(0,0,73) 86.08deg,rgb(0,0,73) 86.25deg,rgb(0,0,74) 86.42deg,rgb(0,0,74) 86.59deg,rgb(0,0,75) 86.75deg,rgb(0,0,75) 86.92deg,rgb(0,0,76) 87.09deg,rgb(0,0,76) 87.26deg,rgb(0,0,77) 87.43deg,rgb(0,0,77) 87.60deg,rgb(0,0,78) 87.77deg,rgb(0,0,78) 87.94deg,rgb(0,0,79) 88.11deg,rgb(0,0,80) 88.28deg,rgb(0,0,80) 88.46deg,rgb(0,0,81) 88.63deg,rgb(0,0,81) 88.80deg,rgb(0,0,82) 88.97deg,rgb(0,0,82) 89.15deg,rgb(0,0,83) 89.32deg,rgb(0,0,83) 89.50deg,rgb(0,0,84) 89.67deg,rgb(0,0,85) 89.85deg,rgb(0,0,85) 90.02deg,rgb(0,0,86) 90.20deg,rgb(0,0,86) 90.37deg,rgb(0,0,87) 90.55deg,rgb(0,0,88) 90.73deg,rgb(0,0,88) 90.90deg,rgb(0,0,89) 91.08deg,rgb(0,0,89) 91.26deg,rgb(0,0,90) 91.44deg,rgb(0,0,91) 91.62deg,rgb(0,0,91) 91.80deg,rgb(0,0,92) 91.98deg,rgb(0,0,92) 92.16deg,rgb(0,0,93) 92.34deg,rgb(0,0,94) 92.52deg,rgb(0,0,94) 92.70deg,rgb(0,0,95) 92.88deg,rgb(0,0,96) 93.06deg,rgb(0,0,96) 93.24deg,rgb(0,0,97) 93.42deg,rgb(0,0,98) 93.61deg,rgb(0,0,98) 93.79deg,rgb(0,0,99) 93.97deg,rgb(0,0,100) 94.16deg,rgb(0,0,100) 94.34deg,rgb(0,0,101) 94.52deg,rgb(0,0,102) 94.71deg,rgb(0,0,102) 94.89deg,rgb(0,0,103) 95.08deg,rgb(0,0,104) 95.26deg,rgb(0,0,104) 95.45deg,rgb(0,0,105) 95.64deg,rgb(0,0,106) 95.82deg,rgb(0,0,106) 96.01deg,rgb(0,0,107) 96.20deg,rgb(0,0,108) 96.38deg,rgb(0,0,109) 96.57deg,rgb(0,0,109) 96.76deg,rgb(0,0,110) 96.95deg,rgb(0,0,111) 97.13deg,rgb(0,0,111) 97.32deg,rgb(0,0,112) 97.51deg,rgb(0,0,113) 97.70deg,rgb(0,0,114) 97.89deg,rgb(0,0,114) 98.08deg,rgb(0,0,115) 98.27deg,rgb(0,0,116) 98.46deg,rgb(0,0,117) 98.65deg,rgb(0,0,117) 98.84deg,rgb(0,0,118) 99.03deg,rgb(0,0,119) 99.22deg,rgb(0,0,120) 99.41deg,rgb(0,0,121) 99.60deg,rgb(0,0,121) 99.79deg,rgb(0,0,122) 99.99deg,rgb(0,0,123) 100.18deg,rgb(0,0,124) 100.37deg,rgb(0,0,125) 100.56deg,rgb(0,0,125) 100.76deg,rgb(0,0,126) 100.95deg,rgb(0,0,127) 101.14deg,rgb(0,0,128) 101.33deg,rgb(0,0,129) 101.53deg,rgb(0,0,130) 101.72deg,rgb(0,0,130) 101.91deg,rgb(0,0,131) 102.11deg,rgb(0,0,132) 102.30deg,rgb(0,0,133) 102.50deg,rgb(0,0,134) 102.69deg,rgb(0,0,135) 102.89deg,rgb(0,0,136) 103.08deg,rgb(0,0,136) 103.28deg,rgb(0,0,137) 103.47deg,rgb(0,0,138) 103.67deg,rgb(0,0,139) 103.86deg,rgb(0,0,140) 104.06deg,rgb(0,0,141) 104.25deg,rgb(0,0,142) 104.45deg,rgb(0,0,143) 104.64deg,rgb(0,0,144) 104.84deg,rgb(0,0,145) 105.03deg,rgb(0,0,146) 105.23deg,rgb(0,0,147) 105.43deg,rgb(0,0,148) 105.62deg,rgb(0,0,149) 105.82deg,rgb(0,0,150) 106.01deg,rgb(0,0,150) 106.21deg,rgb(0,0,151) 106.41deg,rgb(0,0,152) 106.60deg,rgb(0,0,153) 106.80deg,rgb(0,0,154) 107.00deg,rgb(0,0,155) 107.19deg,rgb(0,0,157) 107.39deg,rgb(0,0,158) 107.59deg,rgb(0,0,159) 107.78deg,rgb(0,0,160) 107.98deg,rgb(0,0,161) 108.18deg,rgb(0,0,162) 108.38deg,rgb(0,0,163) 108.57deg,rgb(0,0,164) 108.77deg,rgb(0,0,165) 108.97deg,rgb(0,0,166) 109.16deg,rgb(0,0,167) 109.36deg,rgb(0,0,168) 109.56deg,rgb(0,0,169) 109.75deg,rgb(0,0,170) 109.95deg,rgb(0,0,172) 110.15deg,rgb(0,0,173) 110.34deg,rgb(0,0,174) 110.54deg,rgb(0,0,175) 110.74deg,rgb(0,0,176) 110.94deg,rgb(0,0,177) 111.13deg,rgb(0,0,179) 111.33deg,rgb(0,0,180) 111.53deg,rgb(0,0,181) 111.72deg,rgb(0,0,182) 111.92deg,rgb(0,0,183) 112.12deg,rgb(0,0,185) 112.31deg,rgb(0,0,186) 112.51deg,rgb(0,0,187) 112.70deg,rgb(0,0,188) 112.90deg,rgb(0,0,190) 113.10deg,rgb(0,0,191) 113.29deg,rgb(0,0,192) 113.49deg,rgb(0,0,193) 113.68deg,rgb(0,0,195) 113.88deg,rgb(0,0,196) 114.08deg,rgb(0,0,197) 114.27deg,rgb(0,0,199) 114.47deg,rgb(0,0,200) 114.66deg,rgb(0,0,201) 114.86deg,rgb(0,0,203) 115.05deg,rgb(0,0,204) 115.25deg,rgb(0,0,206) 115.44deg,rgb(0,0,207) 115.64deg,rgb(0,0,208) 115.83deg,rgb(0,0,210) 116.03deg,rgb(0,0,211) 116.22deg,rgb(0,0,213) 116.41deg,rgb(0,0,214) 116.61deg,rgb(0,0,216) 116.80deg,rgb(0,0,217) 116.99deg,rgb(0,0,219) 117.19deg,rgb(0,0,220) 117.38deg,rgb(0,0,222) 117.57deg,rgb(0,0,223) 117.77deg,rgb(0,0,225) 117.96deg,rgb(0,0,226) 118.15deg,rgb(0,0,228) 118.34deg,rgb(0,0,229) 118.54deg,rgb(0,0,231) 118.73deg,rgb(0,0,233) 118.92deg,rgb(0,0,234) 119.11deg,rgb(0,0,236) 119.30deg,rgb(0,0,238) 119.49deg,rgb(0,0,239) 119.68deg,rgb(0,0,241) 119.87deg,rgb(0,0,243) 120.06deg,rgb(0,0,244) 120.25deg,rgb(0,0,246) 120.44deg,rgb(0,0,248) 120.63deg,rgb(0,0,250) 120.82deg,rgb(0,0,251) 121.01deg,rgb(0,0,253) 121.20deg,rgb(0,0,255) 121.39deg) #000;background-blend-mode:lighten"></div><div class="gl" style="clip-path:polygon(224.8px 129.8px,-586.6px 131.1px,107.1px -1254.0px,1205.9px -770.0px);background:conic-gradient(from 326.60deg at -1271.7px 1501.0px,rgb(0,255,0) 60.00deg,rgb(0,255,0) 60.06deg,rgb(1,255,0) 60.11deg,rgb(1,255,0) 60.17deg,rgb(2,255,0) 60.22deg,rgb(2,255,0) 60.28deg,rgb(2,255,0) 60.33deg,rgb(3,255,0) 60.39deg,rgb(3,255,0) 60.45deg,rgb(4,255,0) 60.50deg,rgb(4,255,0) 60.56deg,rgb(5,255,0) 60.61deg,rgb(5,255,0) 60.67deg,rgb(5,255,0) 60.72deg,rgb(6,255,0) 60.78deg,rgb(6,255,0) 60.83deg,rgb(7,255,0) 60.89deg,rgb(7,255,0) 60.95deg,rgb(8,255,0) 61.00deg,rgb(8,255,0) 61.06deg,rgb(8,255,0) 61.11deg,rgb(9,255,0) 61.17deg,rgb(9,255,0) 61.22deg,rgb(10,255,0) 61.28deg,rgb(10,255,0) 61.33deg,rgb(11,255,0) 61.39deg,rgb(11,255,0) 61.45deg,rgb(11,255,0) 61.50deg,rgb(12,255,0) 61.56deg,rgb(12,255,0) 61.61deg,rgb(13,255,0) 61.67deg,rgb(13,255,0) 61.72deg,rgb(14,255,0) 61.78deg,rgb(14,255,0) 61.83deg,rgb(15,255,0) 61.89deg,rgb(15,255,0) 61.94deg,rgb(15,255,0) 62.00deg,rgb(16,255,0) 62.06deg,rgb(16,255,0) 62.11deg,rgb(17,255,0) 62.17deg,rgb(17,255,0) 62.22deg,rgb(18,255,0) 62.28deg,rgb(18,255,0) 62.33deg,rgb(18,255,0) 62.39deg,rgb(19,255,0) 62.44deg,rgb(19,255,0) 62.50deg,rgb(20,255,0) 62.55deg,rgb(20,255,0) 62.61deg,rgb(21,255,0) 62.66deg,rgb(21,255,0) 62.72deg,rgb(22,255,0) 62.78deg,rgb(22,255,0) 62.83deg,rgb(23,255,0) 62.89deg,rgb(23,255,0) 62.94deg,rgb(23,255,0) 63.00deg,rgb(24,255,0) 63.05deg,rgb(24,255,0) 63.11deg,rgb(25,255,0) 63.16deg,rgb(25,255,0) 63.22deg,rgb(26,255,0) 63.27deg,rgb(26,255,0) 63.33deg,rgb(27,255,0) 63.38deg,rgb(27,255,0) 63.44deg,rgb(28,255,0) 63.49deg,rgb(28,255,0) 63.55deg,rgb(29,255,0) 63.60deg,rgb(29,255,0) 63.66deg,rgb(29,255,0) 63.71deg,rgb(30,255,0) 63.77deg,rgb(30,255,0) 63.82deg,rgb(31,255,0) 63.88deg,rgb(31,255,0) 63.93deg,rgb(32,255,0) 63.99deg,rgb(32,255,0) 64.04deg,rgb(33,255,0) 64.10deg,rgb(33,255,0) 64.15deg,rgb(34,255,0) 64.21deg,rgb(34,255,0) 64.26deg,rgb(35,255,0) 64.32deg,rgb(35,255,0) 64.37deg,rgb(36,255,0) 64.43deg,rgb(36,255,0) 64.48deg,rgb(37,255,0) 64.54deg,rgb(37,255,0) 64.59deg,rgb(38,255,0) 64.65deg,rgb(38,255,0) 64.70deg,rgb(38,255,0) 64.76deg,rgb(39,255,0) 64.81deg,rgb(39,255,0) 64.87deg,rgb(40,255,0) 64.92deg,rgb(40,255,0) 64.98deg,rgb(41,255,0) 65.03deg,rgb(41,255,0) 65.09deg,rgb(42,255,0) 65.14deg,rgb(42,255,0) 65.20deg,rgb(43,255,0) 65.25deg,rgb(43,255,0) 65.31deg,rgb(44,255,0) 65.36deg,rgb(44,255,0) 65.42deg,rgb(45,255,0) 65.47deg,rgb(45,255,0) 65.52deg,rgb(46,255,0) 65.58deg,rgb(46,255,0) 65.63deg,rgb(47,255,0) 65.69deg,rgb(47,255,0) 65.74deg,rgb(48,255,0) 65.80deg,rgb(48,255,0) 65.85deg,rgb(49,255,0) 65.91deg,rgb(49,255,0) 65.96deg,rgb(50,255,0) 66.02deg,rgb(50,255,0) 66.07deg,rgb(51,255,0) 66.12deg,rgb(51,255,0) 66.18deg,rgb(52,255,0) 66.23deg,rgb(52,255,0) 66.29deg,rgb(53,255,0) 66.34deg,rgb(53,255,0) 66.40deg,rgb(54,255,0) 66.45deg,rgb(54,255,0) 66.51deg,rgb(55,255,0) 66.56deg,rgb(55,255,0) 66.61deg,rgb(56,255,0) 66.67deg,rgb(57,255,0) 66.72deg,rgb(57,255,0) 66.78deg,rgb(58,255,0) 66.83deg,rgb(58,255,0) 66.89deg,rgb(59,255,0) 66.94deg,rgb(59,255,0) 66.99deg,rgb(60,255,0) 67.05deg,rgb(60,255,0) 67.10deg,rgb(61,255,0) 67.16deg,rgb(61,255,0) 67.21deg,rgb(62,255,0) 67.26deg,rgb(62,255,0) 67.32deg,rgb(63,255,0) 67.37deg,rgb(63,255,0) 67.43deg,rgb(64,255,0) 67.48deg,rgb(64,255,0) 67.53deg,rgb(65,255,0) 67.59deg,rgb(66,255,0) 67.64deg,rgb(66,255,0) 67.70deg,rgb(67,255,0) 67.75deg,rgb(67,255,0) 67.80deg,rgb(68,255,0) 67.86deg,rgb(68,255,0) 67.91deg,rgb(69,255,0) 67.97deg,rgb(69,255,0) 68.02deg,rgb(70,255,0) 68.07deg,rgb(70,255,0) 68.13deg,rgb(71,255,0) 68.18deg,rgb(71,255,0) 68.24deg,rgb(72,255,0) 68.29deg,rgb(73,255,0) 68.34deg,rgb(73,255,0) 68.40deg,rgb(74,255,0) 68.45deg,rgb(74,255,0) 68.50deg,rgb(75,255,0) 68.56deg,rgb(75,255,0) 68.61deg,rgb(76,255,0) 68.66deg,rgb(76,255,0) 68.72deg,rgb(77,255,0) 68.77deg,rgb(78,255,0) 68.83deg,rgb(78,255,0) 68.88deg,rgb(79,255,0) 68.93deg,rgb(79,255,0) 68.99deg,rgb(80,255,0) 69.04deg,rgb(80,255,0) 69.09deg,rgb(81,255,0) 69.15deg,rgb(82,255,0) 69.20deg,rgb(82,255,0) 69.25deg,rgb(83,255,0) 69.31deg,rgb(83,255,0) 69.36deg,rgb(84,255,0) 69.41deg,rgb(84,255,0) 69.47deg,rgb(85,255,0) 69.52deg,rgb(86,255,0) 69.57deg,rgb(86,255,0) 69.63deg,rgb(87,255,0) 69.68deg,rgb(87,255,0) 69.73deg,rgb(88,255,0) 69.79deg,rgb(88,255,0) 69.84deg,rgb(89,255,0) 69.89deg,rgb(90,255,0) 69.95deg,rgb(90,255,0) 70.00deg,rgb(91,255,0) 70.05deg,rgb(91,255,0) 70.10deg,rgb(92,255,0) 70.16deg,rgb(93,255,0) 70.21deg,rgb(93,255,0) 70.26deg,rgb(94,255,0) 70.32deg,rgb(94,255,0) 70.37deg,rgb(95,255,0) 70.42deg,rgb(96,255,0) 70.47deg,rgb(96,255,0) 70.53deg,rgb(97,255,0) 70.58deg,rgb(97,255,0) 70.63deg,rgb(98,255,0) 70.69deg,rgb(99,255,0) 70.74deg,rgb(99,255,0) 70.79deg,rgb(100,255,0) 70.84deg,rgb(100,255,0) 70.90deg,rgb(101,255,0) 70.95deg,rgb(102,255,0) 71.00deg,rgb(102,255,0) 71.06deg,rgb(103,255,0) 71.11deg,rgb(103,255,0) 71.16deg,rgb(104,255,0) 71.21deg,rgb(105,255,0) 71.27deg,rgb(105,255,0) 71.32deg,rgb(106,255,0) 71.37deg,rgb(107,255,0) 71.42deg,rgb(107,255,0) 71.48deg,rgb(108,255,0) 71.53deg,rgb(108,255,0) 71.58deg,rgb(109,255,0) 71.63deg,rgb(110,255,0) 71.68deg,rgb(110,255,0) 71.74deg,rgb(111,255,0) 71.79deg,rgb(112,255,0) 71.84deg,rgb(112,255,0) 71.89deg,rgb(113,255,0) 71.95deg,rgb(113,255,0) 72.00deg,rgb(114,255,0) 72.05deg,rgb(115,255,0) 72.10deg,rgb(115,255,0) 72.15deg,rgb(116,255,0) 72.21deg,rgb(117,255,0) 72.26deg,rgb(117,255,0) 72.31deg,rgb(118,255,0) 72.36deg,rgb(119,255,0) 72.41deg,rgb(119,255,0) 72.47deg,rgb(120,255,0) 72.52deg,rgb(121,255,0) 72.57deg,rgb(121,255,0) 72.62deg,rgb(122,255,0) 72.67deg,rgb(122,255,0) 72.73deg,rgb(123,255,0) 72.78deg,rgb(124,255,0) 72.83deg,rgb(124,255,0) 72.88deg,rgb(125,255,0) 72.93deg,rgb(126,255,0) 72.98deg,rgb(126,255,0) 73.04deg,rgb(127,255,0) 73.09deg,rgb(128,255,0) 73.14deg,rgb(128,255,0) 73.19deg,rgb(129,255,0) 73.24deg,rgb(130,255,0) 73.29deg,rgb(130,255,0) 73.35deg,rgb(131,255,0) 73.40deg,rgb(132,255,0) 73.45deg,rgb(133,255,0) 73.50deg,rgb(133,255,0) 73.55deg,rgb(134,255,0) 73.60deg,rgb(135,255,0) 73.65deg,rgb(135,255,0) 73.71deg,rgb(136,255,0) 73.76deg,rgb(137,255,0) 73.81deg,rgb(137,255,0) 73.86deg,rgb(138,255,0) 73.91deg,rgb(139,255,0) 73.96deg,rgb(139,255,0) 74.01deg,rgb(140,255,0) 74.06deg,rgb(141,255,0) 74.11deg,rgb(141,255,0) 74.17deg,rgb(142,255,0) 74.22deg,rgb(143,255,0) 74.27deg,rgb(144,255,0) 74.32deg,rgb(144,255,0) 74.37deg,rgb(145,255,0) 74.42deg,rgb(146,255,0) 74.47deg,rgb(146,255,0) 74.52deg,rgb(147,255,0) 74.57deg,rgb(148,255,0) 74.62deg,rgb(149,255,0) 74.67deg,rgb(149,255,0) 74.73deg,rgb(150,255,0) 74.78deg,rgb(151,255,0) 74.83deg,rgb(151,255,0) 74.88deg,rgb(152,255,0) 74.93deg,rgb(153,255,0) 74.98deg,rgb(154,255,0) 75.03deg,rgb(154,255,0) 75.08deg,rgb(155,255,0) 75.13deg,rgb(156,255,0) 75.18deg,rgb(157,255,0) 75.23deg,rgb(157,255,0) 75.28deg,rgb(158,255,0) 75.33deg,rgb(159,255,0) 75.38deg,rgb(159,255,0) 75.43deg,rgb(160,255,0) 75.48deg,rgb(161,255,0) 75.53deg,rgb(162,255,0) 75.58deg,rgb(162,255,0) 75.63deg,rgb(163,255,0) 75.68deg,rgb(164,255,0) 75.73deg,rgb(165,255,0) 75.78deg,rgb(165,255,0) 75.84deg,rgb(166,255,0) 75.89deg,rgb(167,255,0) 75.94deg,rgb(168,255,0) 75.99deg,rgb(168,255,0) 76.04deg,rgb(169,255,0) 76.09deg,rgb(170,255,0) 76.14deg,rgb(171,255,0) 76.19deg,rgb(172,255,0) 76.23deg,rgb(172,255,0) 76.28deg,rgb(173,255,0) 76.33deg,rgb(174,255,0) 76.38deg,rgb(175,255,0) 76.43deg,rgb(175,255,0) 76.48deg,rgb(176,255,0) 76.53deg,rgb(177,255,0) 76.58deg,rgb(178,255,0) 76.63deg,rgb(179,255,0) 76.68deg,rgb(179,255,0) 76.73deg,rgb(180,255,0) 76.78deg,rgb(181,255,0) 76.83deg,rgb(182,255,0) 76.88deg,rgb(182,255,0) 76.93deg,rgb(183,255,0) 76.98deg,rgb(184,255,0) 77.03deg,rgb(185,255,0) 77.08deg,rgb(186,255,0) 77.13deg,rgb(187,255,0) 77.18deg,rgb(187,255,0) 77.23deg,rgb(188,255,0) 77.28deg,rgb(189,255,0) 77.32deg,rgb(190,255,0) 77.37deg,rgb(191,255,0) 77.42deg,rgb(191,255,0) 77.47deg,rgb(192,255,0) 77.52deg,rgb(193,255,0) 77.57deg,rgb(194,255,0) 77.62deg,rgb(195,255,0) 77.67deg,rgb(195,255,0) 77.72deg,rgb(196,255,0) 77.77deg,rgb(197,255,0) 77.81deg,rgb(198,255,0) 77.86deg,rgb(199,255,0) 77.91deg,rgb(200,255,0) 77.96deg,rgb(200,255,0) 78.01deg,rgb(201,255,0) 78.06deg,rgb(202,255,0) 78.11deg,rgb(203,255,0) 78.16deg,rgb(204,255,0) 78.21deg,rgb(205,255,0) 78.25deg,rgb(206,255,0) 78.30deg,rgb(206,255,0) 78.35deg,rgb(207,255,0) 78.40deg,rgb(208,255,0) 78.45deg,rgb(209,255,0) 78.50deg,rgb(210,255,0) 78.54deg,rgb(211,255,0) 78.59deg,rgb(212,255,0) 78.64deg,rgb(212,255,0) 78.69deg,rgb(213,255,0) 78.74deg,rgb(214,255,0) 78.79deg,rgb(215,255,0) 78.83deg,rgb(216,255,0) 78.88deg,rgb(217,255,0) 78.93deg,rgb(218,255,0) 78.98deg,rgb(219,255,0) 79.03deg,rgb(220,255,0) 79.08deg,rgb(220,255,0) 79.12deg,rgb(221,255,0) 79.17deg,rgb(222,255,0) 79.22deg,rgb(223,255,0) 79.27deg,rgb(224,255,0) 79.31deg,rgb(225,255,0) 79.36deg,rgb(226,255,0) 79.41deg,rgb(227,255,0) 79.46deg,rgb(228,255,0) 79.51deg,rgb(229,255,0) 79.55deg,rgb(229,255,0) 79.60deg,rgb(230,255,0) 79.65deg,rgb(231,255,0) 79.70deg,rgb(232,255,0) 79.74deg,rgb(233,255,0) 79.79deg,rgb(234,255,0) 79.84deg,rgb(235,255,0) 79.89deg,rgb(236,255,0) 79.93deg,rgb(237,255,0) 79.98deg,rgb(238,255,0) 80.03deg,rgb(239,255,0) 80.08deg,rgb(240,255,0) 80.12deg,rgb(241,255,0) 80.17deg,rgb(242,255,0) 80.22deg,rgb(242,255,0) 80.27deg,rgb(243,255,0) 80.31deg,rgb(244,255,0) 80.36deg,rgb(245,255,0) 80.41deg,rgb(246,255,0) 80.45deg,rgb(247,255,0) 80.50deg,rgb(248,255,0) 80.55deg,rgb(249,255,0) 80.60deg,rgb(250,255,0) 80.64deg,rgb(251,255,0) 80.69deg,rgb(252,255,0) 80.74deg,rgb(253,255,0) 80.78deg,rgb(254,255,0) 80.83deg,rgb(255,255,0) 80.88deg),conic-gradient(from 209.91deg at 3233.4px 124.0px,rgb(0,0,255) 60.00deg,rgb(0,0,254) 60.05deg,rgb(0,0,252) 60.10deg,rgb(0,0,251) 60.16deg,rgb(0,0,250) 60.21deg,rgb(0,0,249) 60.26deg,rgb(0,0,247) 60.31deg,rgb(0,0,246) 60.36deg,rgb(0,0,245) 60.42deg,rgb(0,0,244) 60.47deg,rgb(0,0,243) 60.52deg,rgb(0,0,241) 60.57deg,rgb(0,0,240) 60.63deg,rgb(0,0,239) 60.68deg,rgb(0,0,238) 60.73deg,rgb(0,0,236) 60.78deg,rgb(0,0,235) 60.84deg,rgb(0,0,234) 60.89deg,rgb(0,0,233) 60.94deg,rgb(0,0,232) 60.99deg,rgb(0,0,231) 61.05deg,rgb(0,0,229) 61.10deg,rgb(0,0,228) 61.15deg,rgb(0,0,227) 61.20deg,rgb(0,0,226) 61.26deg,rgb(0,0,225) 61.31deg,rgb(0,0,224) 61.36deg,rgb(0,0,223) 61.42deg,rgb(0,0,222) 61.47deg,rgb(0,0,220) 61.52deg,rgb(0,0,219) 61.58deg,rgb(0,0,218) 61.63deg,rgb(0,0,217) 61.68deg,rgb(0,0,216) 61.74deg,rgb(0,0,215) 61.79deg,rgb(0,0,214) 61.84deg,rgb(0,0,213) 61.90deg,rgb(0,0,212) 61.95deg,rgb(0,0,211) 62.00deg,rgb(0,0,210) 62.06deg,rgb(0,0,208) 62.11deg,rgb(0,0,207) 62.17deg,rgb(0,0,206) 62.22deg,rgb(0,0,205) 62.27deg,rgb(0,0,204) 62.33deg,rgb(0,0,203) 62.38deg,rgb(0,0,202) 62.43deg,rgb(0,0,201) 62.49deg,rgb(0,0,200) 62.54deg,rgb(0,0,199) 62.60deg,rgb(0,0,198) 62.65deg,rgb(0,0,197) 62.70deg,rgb(0,0,196) 62.76deg,rgb(0,0,195) 62.81deg,rgb(0,0,194) 62.87deg,rgb(0,0,193) 62.92deg,rgb(0,0,192) 62.98deg,rgb(0,0,191) 63.03deg,rgb(0,0,190) 63.09deg,rgb(0,0,189) 63.14deg,rgb(0,0,188) 63.19deg,rgb(0,0,187) 63.25deg,rgb(0,0,186) 63.30deg,rgb(0,0,185) 63.36deg,rgb(0,0,184) 63.41deg,rgb(0,0,183) 63.47deg,rgb(0,0,183) 63.52deg,rgb(0,0,182) 63.58deg,rgb(0,0,181) 63.63deg,rgb(0,0,180) 63.69deg,rgb(0,0,179) 63.74deg,rgb(0,0,178) 63.80deg,rgb(0,0,177) 63.85deg,rgb(0,0,176) 63.91deg,rgb(0,0,175) 63.96deg,rgb(0,0,174) 64.02deg,rgb(0,0,173) 64.07deg,rgb(0,0,172) 64.13deg,rgb(0,0,172) 64.19deg,rgb(0,0,171) 64.24deg,rgb(0,0,170) 64.30deg,rgb(0,0,169) 64.35deg,rgb(0,0,168) 64.41deg,rgb(0,0,167) 64.46deg,rgb(0,0,166) 64.52deg,rgb(0,0,165) 64.57deg,rgb(0,0,164) 64.63deg,rgb(0,0,164) 64.69deg,rgb(0,0,163) 64.74deg,rgb(0,0,162) 64.80deg,rgb(0,0,161) 64.85deg,rgb(0,0,160) 64.91deg,rgb(0,0,159) 64.97deg,rgb(0,0,159) 65.02deg,rgb(0,0,158) 65.08deg,rgb(0,0,157) 65.13deg,rgb(0,0,156) 65.19deg,rgb(0,0,155) 65.25deg,rgb(0,0,154) 65.30deg,rgb(0,0,154) 65.36deg,rgb(0,0,153) 65.42deg,rgb(0,0,152) 65.47deg,rgb(0,0,151) 65.53deg,rgb(0,0,150) 65.58deg,rgb(0,0,149) 65.64deg,rgb(0,0,149) 65.70deg,rgb(0,0,148) 65.75deg,rgb(0,0,147) 65.81deg,rgb(0,0,146) 65.87deg,rgb(0,0,145) 65.92deg,rgb(0,0,145) 65.98deg,rgb(0,0,144) 66.04deg,rgb(0,0,143) 66.10deg,rgb(0,0,142) 66.15deg,rgb(0,0,142) 66.21deg,rgb(0,0,141) 66.27deg,rgb(0,0,140) 66.32deg,rgb(0,0,139) 66.38deg,rgb(0,0,139) 66.44deg,rgb(0,0,138) 66.49deg,rgb(0,0,137) 66.55deg,rgb(0,0,136) 66.61deg,rgb(0,0,136) 66.67deg,rgb(0,0,135) 66.72deg,rgb(0,0,134) 66.78deg,rgb(0,0,133) 66.84deg,rgb(0,0,133) 66.90deg,rgb(0,0,132) 66.95deg,rgb(0,0,131) 67.01deg,rgb(0,0,130) 67.07deg,rgb(0,0,130) 67.13deg,rgb(0,0,129) 67.18deg,rgb(0,0,128) 67.24deg,rgb(0,0,127) 67.30deg,rgb(0,0,127) 67.36deg,rgb(0,0,126) 67.42deg,rgb(0,0,125) 67.47deg,rgb(0,0,125) 67.53deg,rgb(0,0,124) 67.59deg,rgb(0,0,123) 67.65deg,rgb(0,0,122) 67.71deg,rgb(0,0,122) 67.76deg,rgb(0,0,121) 67.82deg,rgb(0,0,120) 67.88deg,rgb(0,0,120) 67.94deg,rgb(0,0,119) 68.00deg,rgb(0,0,118) 68.05deg,rgb(0,0,118) 68.11deg,rgb(0,0,117) 68.17deg,rgb(0,0,116) 68.23deg,rgb(0,0,116) 68.29deg,rgb(0,0,115) 68.35deg,rgb(0,0,114) 68.41deg,rgb(0,0,114) 68.46deg,rgb(0,0,113) 68.52deg,rgb(0,0,112) 68.58deg,rgb(0,0,112) 68.64deg,rgb(0,0,111) 68.70deg,rgb(0,0,110) 68.76deg,rgb(0,0,110) 68.82deg,rgb(0,0,109) 68.87deg,rgb(0,0,108) 68.93deg,rgb(0,0,108) 68.99deg,rgb(0,0,107) 69.05deg,rgb(0,0,106) 69.11deg,rgb(0,0,106) 69.17deg,rgb(0,0,105) 69.23deg,rgb(0,0,105) 69.29deg,rgb(0,0,104) 69.35deg,rgb(0,0,103) 69.41deg,rgb(0,0,103) 69.47deg,rgb(0,0,102) 69.52deg,rgb(0,0,101) 69.58deg,rgb(0,0,101) 69.64deg,rgb(0,0,100) 69.70deg,rgb(0,0,100) 69.76deg,rgb(0,0,99) 69.82deg,rgb(0,0,98) 69.88deg,rgb(0,0,98) 69.94deg,rgb(0,0,97) 70.00deg,rgb(0,0,96) 70.06deg,rgb(0,0,96) 70.12deg,rgb(0,0,95) 70.18deg,rgb(0,0,95) 70.24deg,rgb(0,0,94) 70.30deg,rgb(0,0,93) 70.36deg,rgb(0,0,93) 70.42deg,rgb(0,0,92) 70.48deg,rgb(0,0,92) 70.54deg,rgb(0,0,91) 70.60deg,rgb(0,0,90) 70.66deg,rgb(0,0,90) 70.72deg,rgb(0,0,89) 70.78deg,rgb(0,0,89) 70.84deg,rgb(0,0,88) 70.90deg,rgb(0,0,88) 70.96deg,rgb(0,0,87) 71.02deg,rgb(0,0,86) 71.08deg,rgb(0,0,86) 71.14deg,rgb(0,0,85) 71.20deg,rgb(0,0,85) 71.26deg,rgb(0,0,84) 71.32deg,rgb(0,0,84) 71.38deg,rgb(0,0,83) 71.44deg,rgb(0,0,82) 71.50deg,rgb(0,0,82) 71.56deg,rgb(0,0,81) 71.62deg,rgb(0,0,81) 71.68deg,rgb(0,0,80) 71.74deg,rgb(0,0,80) 71.80deg,rgb(0,0,79) 71.87deg,rgb(0,0,79) 71.93deg,rgb(0,0,78) 71.99deg,rgb(0,0,78) 72.05deg,rgb(0,0,77) 72.11deg,rgb(0,0,76) 72.17deg,rgb(0,0,76) 72.23deg,rgb(0,0,75) 72.29deg,rgb(0,0,75) 72.35deg,rgb(0,0,74) 72.41deg,rgb(0,0,74) 72.47deg,rgb(0,0,73) 72.53deg,rgb(0,0,73) 72.60deg,rgb(0,0,72) 72.66deg,rgb(0,0,72) 72.72deg,rgb(0,0,71) 72.78deg,rgb(0,0,71) 72.84deg,rgb(0,0,70) 72.90deg,rgb(0,0,70) 72.96deg,rgb(0,0,69) 73.02deg,rgb(0,0,69) 73.09deg,rgb(0,0,68) 73.15deg,rgb(0,0,68) 73.21deg,rgb(0,0,67) 73.27deg,rgb(0,0,67) 73.33deg,rgb(0,0,66) 73.39deg,rgb(0,0,66) 73.45deg,rgb(0,0,65) 73.52deg,rgb(0,0,65) 73.58deg,rgb(0,0,64) 73.64deg,rgb(0,0,64) 73.70deg,rgb(0,0,63) 73.76deg,rgb(0,0,63) 73.82deg,rgb(0,0,62) 73.89deg,rgb(0,0,62) 73.95deg,rgb(0,0,61) 74.01deg,rgb(0,0,61) 74.07deg,rgb(0,0,60) 74.13deg,rgb(0,0,60) 74.20deg,rgb(0,0,59) 74.26deg,rgb(0,0,59) 74.32deg,rgb(0,0,58) 74.38deg,rgb(0,0,58) 74.44deg,rgb(0,0,57) 74.51deg,rgb(0,0,57) 74.57deg,rgb(0,0,56) 74.63deg,rgb(0,0,56) 74.69deg,rgb(0,0,55) 74.75deg,rgb(0,0,55) 74.82deg,rgb(0,0,54) 74.88deg,rgb(0,0,54) 74.94deg,rgb(0,0,53) 75.00deg,rgb(0,0,53) 75.06deg,rgb(0,0,53) 75.13deg,rgb(0,0,52) 75.19deg,rgb(0,0,52) 75.25deg,rgb(0,0,51) 75.31deg,rgb(0,0,51) 75.38deg,rgb(0,0,50) 75.44deg,rgb(0,0,50) 75.50deg,rgb(0,0,49) 75.56deg,rgb(0,0,49) 75.63deg,rgb(0,0,48) 75.69deg,rgb(0,0,48) 75.75deg,rgb(0,0,47) 75.81deg,rgb(0,0,47) 75.88deg,rgb(0,0,47) 75.94deg,rgb(0,0,46) 76.00deg,rgb(0,0,46) 76.07deg,rgb(0,0,45) 76.13deg,rgb(0,0,45) 76.19deg,rgb(0,0,44) 76.25deg,rgb(0,0,44) 76.32deg,rgb(0,0,44) 76.38deg,rgb(0,0,43) 76.44deg,rgb(0,0,43) 76.51deg,rgb(0,0,42) 76.57deg,rgb(0,0,42) 76.63deg,rgb(0,0,41) 76.69deg,rgb(0,0,41) 76.76deg,rgb(0,0,40) 76.82deg,rgb(0,0,40) 76.88deg,rgb(0,0,40) 76.95deg,rgb(0,0,39) 77.01deg,rgb(0,0,39) 77.07deg,rgb(0,0,38) 77.14deg,rgb(0,0,38) 77.20deg,rgb(0,0,38) 77.26deg,rgb(0,0,37) 77.33deg,rgb(0,0,37) 77.39deg,rgb(0,0,36) 77.45deg,rgb(0,0,36) 77.52deg,rgb(0,0,35) 77.58deg,rgb(0,0,35) 77.64deg,rgb(0,0,35) 77.71deg,rgb(0,0,34) 77.77deg,rgb(0,0,34) 77.83deg,rgb(0,0,33) 77.90deg,rgb(0,0,33) 77.96deg,rgb(0,0,33) 78.02deg,rgb(0,0,32) 78.09deg,rgb(0,0,32) 78.15deg,rgb(0,0,31) 78.21deg,rgb(0,0,31) 78.28deg,rgb(0,0,31) 78.34deg,rgb(0,0,30) 78.40deg,rgb(0,0,30) 78.47deg,rgb(0,0,29) 78.53deg,rgb(0,0,29) 78.59deg,rgb(0,0,29) 78.66deg,rgb(0,0,28) 78.72deg,rgb(0,0,28) 78.79deg,rgb(0,0,27) 78.85deg,rgb(0,0,27) 78.91deg,rgb(0,0,27) 78.98deg,rgb(0,0,26) 79.04deg,rgb(0,0,26) 79.10deg,rgb(0,0,25) 79.17deg,rgb(0,0,25) 79.23deg,rgb(0,0,25) 79.30deg,rgb(0,0,24) 79.36deg,rgb(0,0,24) 79.42deg,rgb(0,0,24) 79.49deg,rgb(0,0,23) 79.55deg,rgb(0,0,23) 79.62deg,rgb(0,0,22) 79.68deg,rgb(0,0,22) 79.74deg,rgb(0,0,22) 79.81deg,rgb(0,0,21) 79.87deg,rgb(0,0,21) 79.94deg,rgb(0,0,21) 80.00deg,rgb(0,0,20) 80.06deg,rgb(0,0,20) 80.13deg,rgb(0,0,19) 80.19deg,rgb(0,0,19) 80.26deg,rgb(0,0,19) 80.32deg,rgb(0,0,18) 80.38deg,rgb(0,0,18) 80.45deg,rgb(0,0,18) 80.51deg,rgb(0,0,17) 80.58deg,rgb(0,0,17) 80.64deg,rgb(0,0,17) 80.71deg,rgb(0,0,16) 80.77deg,rgb(0,0,16) 80.83deg,rgb(0,0,15) 80.90deg,rgb(0,0,15) 80.96deg,rgb(0,0,15) 81.03deg,rgb(0,0,14) 81.09deg,rgb(0,0,14) 81.16deg,rgb(0,0,14) 81.22deg,rgb(0,0,13) 81.28deg,rgb(0,0,13) 81.35deg,rgb(0,0,13) 81.41deg,rgb(0,0,12) 81.48deg,rgb(0,0,12) 81.54deg,rgb(0,0,12) 81.61deg,rgb(0,0,11) 81.67deg,rgb(0,0,11) 81.74deg,rgb(0,0,11) 81.80deg,rgb(0,0,10) 81.86deg,rgb(0,0,10) 81.93deg,rgb(0,0,10) 81.99deg,rgb(0,0,9) 82.06deg,rgb(0,0,9) 82.12deg,rgb(0,0,9) 82.19deg,rgb(0,0,8) 82.25deg,rgb(0,0,8) 82.32deg,rgb(0,0,8) 82.38deg,rgb(0,0,7) 82.45deg,rgb(0,0,7) 82.51deg,rgb(0,0,7) 82.57deg,rgb(0,0,6) 82.64deg,rgb(0,0,6) 82.70deg,rgb(0,0,6) 82.77deg,rgb(0,0,5) 82.83deg,rgb(0,0,5) 82.90deg,rgb(0,0,5) 82.96deg,rgb(0,0,4) 83.03deg,rgb(0,0,4) 83.09deg,rgb(0,0,4) 83.16deg,rgb(0,0,3) 83.22deg,rgb(0,0,3) 83.29deg,rgb(0,0,3) 83.35deg,rgb(0,0,2) 83.42deg,rgb(0,0,2) 83.48deg,rgb(0,0,2) 83.54deg,rgb(0,0,1) 83.61deg,rgb(0,0,1) 83.67deg,rgb(0,0,1) 83.74deg,rgb(0,0,0) 83.80deg,rgb(0,0,0) 83.87deg) #000;background-blend-mode:lighten"></div><div class="gl" style="clip-path:polygon(225.2px 128.2px,300.8px 1021.2px,-1273.2px 1502.3px,-585.8px 129.5px);background:conic-gradient(from 115.16deg at 107.4px -1253.0px,rgb(255,0,255) 60.00deg,rgb(254,0,255) 60.10deg,rgb(253,0,255) 60.20deg,rgb(252,0,255) 60.30deg,rgb(251,0,255) 60.40deg,rgb(250,0,255) 60.50deg,rgb(249,0,255) 60.60deg,rgb(248,0,255) 60.70deg,rgb(247,0,255) 60.80deg,rgb(246,0,255) 60.90deg,rgb(245,0,255) 61.00deg,rgb(244,0,255) 61.10deg,rgb(243,0,255) 61.20deg,rgb(242,0,255) 61.30deg,rgb(242,0,255) 61.40deg,rgb(241,0,255) 61.50deg,rgb(240,0,255) 61.60deg,rgb(239,0,255) 61.70deg,rgb(238,0,255) 61.80deg,rgb(237,0,255) 61.90deg,rgb(236,0,255) 62.00deg,rgb(235,0,255) 62.10deg,rgb(234,0,255) 62.20deg,rgb(233,0,255) 62.30deg,rgb(232,0,255) 62.40deg,rgb(231,0,255) 62.50deg,rgb(230,0,255) 62.59deg,rgb(229,0,255) 62.69deg,rgb(229,0,255) 62.79deg,rgb(228,0,255) 62.89deg,rgb(227,0,255) 62.99deg,rgb(226,0,255) 63.09deg,rgb(225,0,255) 63.19deg,rgb(224,0,255) 63.28deg,rgb(223,0,255) 63.38deg,rgb(222,0,255) 63.48deg,rgb(221,0,255) 63.58deg,rgb(220,0,255) 63.67deg,rgb(220,0,255) 63.77deg,rgb(219,0,255) 63.87deg,rgb(218,0,255) 63.97deg,rgb(217,0,255) 64.06deg,rgb(216,0,255) 64.16deg,rgb(215,0,255) 64.26deg,rgb(214,0,255) 64.36deg,rgb(213,0,255) 64.45deg,rgb(213,0,255) 64.55deg,rgb(212,0,255) 64.65deg,rgb(211,0,255) 64.74deg,rgb(210,0,255) 64.84deg,rgb(209,0,255) 64.94deg,rgb(208,0,255) 65.03deg,rgb(207,0,255) 65.13deg,rgb(207,0,255) 65.23deg,rgb(206,0,255) 65.32deg,rgb(205,0,255) 65.42deg,rgb(204,0,255) 65.51deg,rgb(203,0,255) 65.61deg,rgb(202,0,255) 65.70deg,rgb(201,0,255) 65.80deg,rgb(201,0,255) 65.90deg,rgb(200,0,255) 65.99deg,rgb(199,0,255) 66.09deg,rgb(198,0,255) 66.18deg,rgb(197,0,255) 66.28deg,rgb(196,0,255) 66.37deg,rgb(196,0,255) 66.47deg,rgb(195,0,255) 66.56deg,rgb(194,0,255) 66.66deg,rgb(193,0,255) 66.75deg,rgb(192,0,255) 66.84deg,rgb(192,0,255) 66.94deg,rgb(191,0,255) 67.03deg,rgb(190,0,255) 67.13deg,rgb(189,0,255) 67.22deg,rgb(188,0,255) 67.31deg,rgb(187,0,255) 67.41deg,rgb(187,0,255) 67.50deg,rgb(186,0,255) 67.60deg,rgb(185,0,255) 67.69deg,rgb(184,0,255) 67.78deg,rgb(183,0,255) 67.88deg,rgb(183,0,255) 67.97deg,rgb(182,0,255) 68.06deg,rgb(181,0,255) 68.15deg,rgb(180,0,255) 68.25deg,rgb(179,0,255) 68.34deg,rgb(179,0,255) 68.43deg,rgb(178,0,255) 68.52deg,rgb(177,0,255) 68.62deg,rgb(176,0,255) 68.71deg,rgb(176,0,255) 68.80deg,rgb(175,0,255) 68.89deg,rgb(174,0,255) 68.99deg,rgb(173,0,255) 69.08deg,rgb(172,0,255) 69.17deg,rgb(172,0,255) 69.26deg,rgb(171,0,255) 69.35deg,rgb(170,0,255) 69.44deg,rgb(169,0,255) 69.53deg,rgb(169,0,255) 69.63deg,rgb(168,0,255) 69.72deg,rgb(167,0,255) 69.81deg,rgb(166,0,255) 69.90deg,rgb(166,0,255) 69.99deg,rgb(165,0,255) 70.08deg,rgb(164,0,255) 70.17deg,rgb(163,0,255) 70.26deg,rgb(163,0,255) 70.35deg,rgb(162,0,255) 70.44deg,rgb(161,0,255) 70.53deg,rgb(160,0,255) 70.62deg,rgb(160,0,255) 70.71deg,rgb(159,0,255) 70.80deg,rgb(158,0,255) 70.89deg,rgb(157,0,255) 70.98deg,rgb(157,0,255) 71.07deg,rgb(156,0,255) 71.16deg,rgb(155,0,255) 71.24deg,rgb(155,0,255) 71.33deg,rgb(154,0,255) 71.42deg,rgb(153,0,255) 71.51deg,rgb(152,0,255) 71.60deg,rgb(152,0,255) 71.69deg,rgb(151,0,255) 71.78deg,rgb(150,0,255) 71.86deg,rgb(149,0,255) 71.95deg,rgb(149,0,255) 72.04deg,rgb(148,0,255) 72.13deg,rgb(147,0,255) 72.21deg,rgb(147,0,255) 72.30deg,rgb(146,0,255) 72.39deg,rgb(145,0,255) 72.48deg,rgb(144,0,255) 72.56deg,rgb(144,0,255) 72.65deg,rgb(143,0,255) 72.74deg,rgb(142,0,255) 72.82deg,rgb(142,0,255) 72.91deg,rgb(141,0,255) 73.00deg,rgb(140,0,255) 73.08deg,rgb(140,0,255) 73.17deg,rgb(139,0,255) 73.26deg,rgb(138,0,255) 73.34deg,rgb(138,0,255) 73.43deg,rgb(137,0,255) 73.51deg,rgb(136,0,255) 73.60deg,rgb(135,0,255) 73.69deg,rgb(135,0,255) 73.77deg,rgb(134,0,255) 73.86deg,rgb(133,0,255) 73.94deg,rgb(133,0,255) 74.03deg,rgb(132,0,255) 74.11deg,rgb(131,0,255) 74.20deg,rgb(131,0,255) 74.28deg,rgb(130,0,255) 74.37deg,rgb(129,0,255) 74.45deg,rgb(129,0,255) 74.53deg,rgb(128,0,255) 74.62deg,rgb(127,0,255) 74.70deg,rgb(127,0,255) 74.79deg,rgb(126,0,255) 74.87deg,rgb(125,0,255) 74.95deg,rgb(125,0,255) 75.04deg,rgb(124,0,255) 75.12deg,rgb(123,0,255) 75.20deg,rgb(123,0,255) 75.29deg,rgb(122,0,255) 75.37deg,rgb(121,0,255) 75.45deg,rgb(121,0,255) 75.54deg,rgb(120,0,255) 75.62deg,rgb(119,0,255) 75.70deg,rgb(119,0,255) 75.78deg,rgb(118,0,255) 75.87deg,rgb(117,0,255) 75.95deg,rgb(117,0,255) 76.03deg,rgb(116,0,255) 76.11deg,rgb(116,0,255) 76.19deg,rgb(115,0,255) 76.28deg,rgb(114,0,255) 76.36deg,rgb(114,0,255) 76.44deg,rgb(113,0,255) 76.52deg,rgb(112,0,255) 76.60deg,rgb(112,0,255) 76.68deg,rgb(111,0,255) 76.76deg,rgb(110,0,255) 76.84deg,rgb(110,0,255) 76.92deg,rgb(109,0,255) 77.00deg,rgb(109,0,255) 77.09deg,rgb(108,0,255) 77.17deg,rgb(107,0,255) 77.25deg,rgb(107,0,255) 77.33deg,rgb(106,0,255) 77.41deg,rgb(105,0,255) 77.49deg,rgb(105,0,255) 77.57deg,rgb(104,0,255) 77.64deg,rgb(104,0,255) 77.72deg,rgb(103,0,255) 77.80deg,rgb(102,0,255) 77.88deg,rgb(102,0,255) 77.96deg,rgb(101,0,255) 78.04deg,rgb(101,0,255) 78.12deg,rgb(100,0,255) 78.20deg,rgb(99,0,255) 78.28deg,rgb(99,0,255) 78.35deg,rgb(98,0,255) 78.43deg,rgb(98,0,255) 78.51deg,rgb(97,0,255) 78.59deg,rgb(96,0,255) 78.67deg,rgb(96,0,255) 78.74deg,rgb(95,0,255) 78.82deg,rgb(95,0,255) 78.90deg,rgb(94,0,255) 78.98deg,rgb(93,0,255) 79.05deg,rgb(93,0,255) 79.13deg,rgb(92,0,255) 79.21deg,rgb(92,0,255) 79.29deg,rgb(91,0,255) 79.36deg,rgb(90,0,255) 79.44deg,rgb(90,0,255) 79.52deg,rgb(89,0,255) 79.59deg,rgb(89,0,255) 79.67deg,rgb(88,0,255) 79.74deg,rgb(87,0,255) 79.82deg,rgb(87,0,255) 79.90deg,rgb(86,0,255) 79.97deg,rgb(86,0,255) 80.05deg,rgb(85,0,255) 80.12deg,rgb(85,0,255) 80.20deg,rgb(84,0,255) 80.27deg,rgb(83,0,255) 80.35deg,rgb(83,0,255) 80.42deg,rgb(82,0,255) 80.50deg,rgb(82,0,255) 80.57deg,rgb(81,0,255) 80.65deg,rgb(81,0,255) 80.72deg,rgb(80,0,255) 80.80deg,rgb(79,0,255) 80.87deg,rgb(79,0,255) 80.95deg,rgb(78,0,255) 81.02deg,rgb(78,0,255) 81.09deg,rgb(77,0,255) 81.17deg,rgb(77,0,255) 81.24deg,rgb(76,0,255) 81.31deg,rgb(76,0,255) 81.39deg,rgb(75,0,255) 81.46deg,rgb(74,0,255) 81.53deg,rgb(74,0,255) 81.61deg,rgb(73,0,255) 81.68deg,rgb(73,0,255) 81.75deg,rgb(72,0,255) 81.82deg,rgb(72,0,255) 81.90deg,rgb(71,0,255) 81.97deg,rgb(71,0,255) 82.04deg,rgb(70,0,255) 82.11deg,rgb(69,0,255) 82.19deg,rgb(69,0,255) 82.26deg,rgb(68,0,255) 82.33deg,rgb(68,0,255) 82.40deg,rgb(67,0,255) 82.47deg,rgb(67,0,255) 82.54deg,rgb(66,0,255) 82.62deg,rgb(66,0,255) 82.69deg,rgb(65,0,255) 82.76deg,rgb(65,0,255) 82.83deg,rgb(64,0,255) 82.90deg,rgb(64,0,255) 82.97deg,rgb(63,0,255) 83.04deg,rgb(62,0,255) 83.11deg,rgb(62,0,255) 83.18deg,rgb(61,0,255) 83.25deg,rgb(61,0,255) 83.32deg,rgb(60,0,255) 83.39deg,rgb(60,0,255) 83.46deg,rgb(59,0,255) 83.53deg,rgb(59,0,255) 83.60deg,rgb(58,0,255) 83.67deg,rgb(58,0,255) 83.74deg,rgb(57,0,255) 83.81deg,rgb(57,0,255) 83.88deg,rgb(56,0,255) 83.95deg,rgb(56,0,255) 84.02deg,rgb(55,0,255) 84.08deg,rgb(55,0,255) 84.15deg,rgb(54,0,255) 84.22deg,rgb(54,0,255) 84.29deg,rgb(53,0,255) 84.36deg,rgb(53,0,255) 84.43deg,rgb(52,0,255) 84.49deg,rgb(52,0,255) 84.56deg,rgb(51,0,255) 84.63deg,rgb(51,0,255) 84.70deg,rgb(50,0,255) 84.76deg,rgb(49,0,255) 84.83deg,rgb(49,0,255) 84.90deg,rgb(48,0,255) 84.97deg,rgb(48,0,255) 85.03deg,rgb(47,0,255) 85.10deg,rgb(47,0,255) 85.17deg,rgb(46,0,255) 85.23deg,rgb(46,0,255) 85.30deg,rgb(45,0,255) 85.37deg,rgb(45,0,255) 85.43deg,rgb(44,0,255) 85.50deg,rgb(44,0,255) 85.57deg,rgb(43,0,255) 85.63deg,rgb(43,0,255) 85.70deg,rgb(43,0,255) 85.76deg,rgb(42,0,255) 85.83deg,rgb(42,0,255) 85.89deg,rgb(41,0,255) 85.96deg,rgb(41,0,255) 86.02deg,rgb(40,0,255) 86.09deg,rgb(40,0,255) 86.15deg,rgb(39,0,255) 86.22deg,rgb(39,0,255) 86.28deg,rgb(38,0,255) 86.35deg,rgb(38,0,255) 86.41deg,rgb(37,0,255) 86.48deg,rgb(37,0,255) 86.54deg,rgb(36,0,255) 86.61deg,rgb(36,0,255) 86.67deg,rgb(35,0,255) 86.73deg,rgb(35,0,255) 86.80deg,rgb(34,0,255) 86.86deg,rgb(34,0,255) 86.93deg,rgb(33,0,255) 86.99deg,rgb(33,0,255) 87.05deg,rgb(32,0,255) 87.12deg,rgb(32,0,255) 87.18deg,rgb(31,0,255) 87.24deg,rgb(31,0,255) 87.31deg,rgb(30,0,255) 87.37deg,rgb(30,0,255) 87.43deg,rgb(30,0,255) 87.49deg,rgb(29,0,255) 87.56deg,rgb(29,0,255) 87.62deg,rgb(28,0,255) 87.68deg,rgb(28,0,255) 87.74deg,rgb(27,0,255) 87.81deg,rgb(27,0,255) 87.87deg,rgb(26,0,255) 87.93deg,rgb(26,0,255) 87.99deg,rgb(25,0,255) 88.05deg,rgb(25,0,255) 88.11deg,rgb(24,0,255) 88.18deg,rgb(24,0,255) 88.24deg,rgb(24,0,255) 88.30deg,rgb(23,0,255) 88.36deg,rgb(23,0,255) 88.42deg,rgb(22,0,255) 88.48deg,rgb(22,0,255) 88.54deg,rgb(21,0,255) 88.60deg,rgb(21,0,255) 88.66deg,rgb(20,0,255) 88.72deg,rgb(20,0,255) 88.78deg,rgb(19,0,255) 88.84deg,rgb(19,0,255) 88.90deg,rgb(19,0,255) 88.96deg,rgb(18,0,255) 89.02deg,rgb(18,0,255) 89.08deg,rgb(17,0,255) 89.14deg,rgb(17,0,255) 89.20deg,rgb(16,0,255) 89.26deg,rgb(16,0,255) 89.32deg,rgb(15,0,255) 89.38deg,rgb(15,0,255) 89.44deg,rgb(15,0,255) 89.50deg,rgb(14,0,255) 89.56deg,rgb(14,0,255) 89.62deg,rgb(13,0,255) 89.67deg,rgb(13,0,255) 89.73deg,rgb(12,0,255) 89.79deg,rgb(12,0,255) 89.85deg,rgb(11,0,255) 89.91deg,rgb(11,0,255) 89.97deg,rgb(11,0,255) 90.02deg,rgb(10,0,255) 90.08deg,rgb(10,0,255) 90.14deg,rgb(9,0,255) 90.20deg,rgb(9,0,255) 90.25deg,rgb(8,0,255) 90.31deg,rgb(8,0,255) 90.37deg,rgb(8,0,255) 90.43deg,rgb(7,0,255) 90.48deg,rgb(7,0,255) 90.54deg,rgb(6,0,255) 90.60deg,rgb(6,0,255) 90.65deg,rgb(5,0,255) 90.71deg,rgb(5,0,255) 90.77deg,rgb(5,0,255) 90.82deg,rgb(4,0,255) 90.88deg,rgb(4,0,255) 90.94deg,rgb(3,0,255) 90.99deg,rgb(3,0,255) 91.05deg,rgb(3,0,255) 91.11deg,rgb(2,0,255) 91.16deg,rgb(2,0,255) 91.22deg,rgb(1,0,255) 91.27deg,rgb(1,0,255) 91.33deg,rgb(0,0,255) 91.38deg,rgb(0,0,255) 91.44deg),conic-gradient(from 193.00deg at 3233.4px 124.0px,rgb(0,0,0) 60.00deg,rgb(0,0,0) 60.03deg,rgb(0,1,0) 60.07deg,rgb(0,1,0) 60.10deg,rgb(0,1,0) 60.14deg,rgb(0,2,0) 60.17deg,rgb(0,2,0) 60.20deg,rgb(0,2,0) 60.24deg,rgb(0,3,0) 60.27deg,rgb(0,3,0) 60.31deg,rgb(0,3,0) 60.34deg,rgb(0,4,0) 60.37deg,rgb(0,4,0) 60.41deg,rgb(0,4,0) 60.44deg,rgb(0,5,0) 60.48deg,rgb(0,5,0) 60.51deg,rgb(0,5,0) 60.54deg,rgb(0,6,0) 60.58deg,rgb(0,6,0) 60.61deg,rgb(0,6,0) 60.65deg,rgb(0,7,0) 60.68deg,rgb(0,7,0) 60.72deg,rgb(0,7,0) 60.75deg,rgb(0,8,0) 60.79deg,rgb(0,8,0) 60.82deg,rgb(0,8,0) 60.86deg,rgb(0,9,0) 60.89deg,rgb(0,9,0) 60.93deg,rgb(0,9,0) 60.96deg,rgb(0,10,0) 61.00deg,rgb(0,10,0) 61.03deg,rgb(0,10,0) 61.06deg,rgb(0,11,0) 61.10deg,rgb(0,11,0) 61.13deg,rgb(0,11,0) 61.17deg,rgb(0,12,0) 61.20deg,rgb(0,12,0) 61.24deg,rgb(0,12,0) 61.28deg,rgb(0,13,0) 61.31deg,rgb(0,13,0) 61.35deg,rgb(0,13,0) 61.38deg,rgb(0,14,0) 61.42deg,rgb(0,14,0) 61.45deg,rgb(0,15,0) 61.49deg,rgb(0,15,0) 61.52deg,rgb(0,15,0) 61.56deg,rgb(0,16,0) 61.59deg,rgb(0,16,0) 61.63deg,rgb(0,16,0) 61.66deg,rgb(0,17,0) 61.70deg,rgb(0,17,0) 61.74deg,rgb(0,17,0) 61.77deg,rgb(0,18,0) 61.81deg,rgb(0,18,0) 61.84deg,rgb(0,19,0) 61.88deg,rgb(0,19,0) 61.92deg,rgb(0,19,0) 61.95deg,rgb(0,20,0) 61.99deg,rgb(0,20,0) 62.02deg,rgb(0,20,0) 62.06deg,rgb(0,21,0) 62.10deg,rgb(0,21,0) 62.13deg,rgb(0,22,0) 62.17deg,rgb(0,22,0) 62.20deg,rgb(0,22,0) 62.24deg,rgb(0,23,0) 62.28deg,rgb(0,23,0) 62.31deg,rgb(0,23,0) 62.35deg,rgb(0,24,0) 62.39deg,rgb(0,24,0) 62.42deg,rgb(0,25,0) 62.46deg,rgb(0,25,0) 62.49deg,rgb(0,25,0) 62.53deg,rgb(0,26,0) 62.57deg,rgb(0,26,0) 62.60deg,rgb(0,26,0) 62.64deg,rgb(0,27,0) 62.68deg,rgb(0,27,0) 62.71deg,rgb(0,28,0) 62.75deg,rgb(0,28,0) 62.79deg,rgb(0,28,0) 62.83deg,rgb(0,29,0) 62.86deg,rgb(0,29,0) 62.90deg,rgb(0,30,0) 62.94deg,rgb(0,30,0) 62.97deg,rgb(0,30,0) 63.01deg,rgb(0,31,0) 63.05deg,rgb(0,31,0) 63.08deg,rgb(0,32,0) 63.12deg,rgb(0,32,0) 63.16deg,rgb(0,32,0) 63.20deg,rgb(0,33,0) 63.23deg,rgb(0,33,0) 63.27deg,rgb(0,34,0) 63.31deg,rgb(0,34,0) 63.35deg,rgb(0,34,0) 63.38deg,rgb(0,35,0) 63.42deg,rgb(0,35,0) 63.46deg,rgb(0,36,0) 63.50deg,rgb(0,36,0) 63.53deg,rgb(0,37,0) 63.57deg,rgb(0,37,0) 63.61deg,rgb(0,37,0) 63.65deg,rgb(0,38,0) 63.69deg,rgb(0,38,0) 63.72deg,rgb(0,39,0) 63.76deg,rgb(0,39,0) 63.80deg,rgb(0,40,0) 63.84deg,rgb(0,40,0) 63.87deg,rgb(0,40,0) 63.91deg,rgb(0,41,0) 63.95deg,rgb(0,41,0) 63.99deg,rgb(0,42,0) 64.03deg,rgb(0,42,0) 64.07deg,rgb(0,43,0) 64.10deg,rgb(0,43,0) 64.14deg,rgb(0,43,0) 64.18deg,rgb(0,44,0) 64.22deg,rgb(0,44,0) 64.26deg,rgb(0,45,0) 64.30deg,rgb(0,45,0) 64.33deg,rgb(0,46,0) 64.37deg,rgb(0,46,0) 64.41deg,rgb(0,47,0) 64.45deg,rgb(0,47,0) 64.49deg,rgb(0,47,0) 64.53deg,rgb(0,48,0) 64.57deg,rgb(0,48,0) 64.61deg,rgb(0,49,0) 64.64deg,rgb(0,49,0) 64.68deg,rgb(0,50,0) 64.72deg,rgb(0,50,0) 64.76deg,rgb(0,51,0) 64.80deg,rgb(0,51,0) 64.84deg,rgb(0,51,0) 64.88deg,rgb(0,52,0) 64.92deg,rgb(0,52,0) 64.96deg,rgb(0,53,0) 65.00deg,rgb(0,53,0) 65.04deg,rgb(0,54,0) 65.08deg,rgb(0,54,0) 65.12deg,rgb(0,55,0) 65.15deg,rgb(0,55,0) 65.19deg,rgb(0,56,0) 65.23deg,rgb(0,56,0) 65.27deg,rgb(0,57,0) 65.31deg,rgb(0,57,0) 65.35deg,rgb(0,58,0) 65.39deg,rgb(0,58,0) 65.43deg,rgb(0,59,0) 65.47deg,rgb(0,59,0) 65.51deg,rgb(0,60,0) 65.55deg,rgb(0,60,0) 65.59deg,rgb(0,61,0) 65.63deg,rgb(0,61,0) 65.67deg,rgb(0,61,0) 65.71deg,rgb(0,62,0) 65.75deg,rgb(0,62,0) 65.79deg,rgb(0,63,0) 65.83deg,rgb(0,63,0) 65.87deg,rgb(0,64,0) 65.91deg,rgb(0,64,0) 65.95deg,rgb(0,65,0) 65.99deg,rgb(0,65,0) 66.03deg,rgb(0,66,0) 66.07deg,rgb(0,66,0) 66.11deg,rgb(0,67,0) 66.16deg,rgb(0,68,0) 66.20deg,rgb(0,68,0) 66.24deg,rgb(0,69,0) 66.28deg,rgb(0,69,0) 66.32deg,rgb(0,70,0) 66.36deg,rgb(0,70,0) 66.40deg,rgb(0,71,0) 66.44deg,rgb(0,71,0) 66.48deg,rgb(0,72,0) 66.52deg,rgb(0,72,0) 66.56deg,rgb(0,73,0) 66.60deg,rgb(0,73,0) 66.65deg,rgb(0,74,0) 66.69deg,rgb(0,74,0) 66.73deg,rgb(0,75,0) 66.77deg,rgb(0,75,0) 66.81deg,rgb(0,76,0) 66.85deg,rgb(0,76,0) 66.89deg,rgb(0,77,0) 66.93deg,rgb(0,77,0) 66.98deg,rgb(0,78,0) 67.02deg,rgb(0,79,0) 67.06deg,rgb(0,79,0) 67.10deg,rgb(0,80,0) 67.14deg,rgb(0,80,0) 67.18deg,rgb(0,81,0) 67.23deg,rgb(0,81,0) 67.27deg,rgb(0,82,0) 67.31deg,rgb(0,82,0) 67.35deg,rgb(0,83,0) 67.39deg,rgb(0,84,0) 67.43deg,rgb(0,84,0) 67.48deg,rgb(0,85,0) 67.52deg,rgb(0,85,0) 67.56deg,rgb(0,86,0) 67.60deg,rgb(0,86,0) 67.64deg,rgb(0,87,0) 67.69deg,rgb(0,88,0) 67.73deg,rgb(0,88,0) 67.77deg,rgb(0,89,0) 67.81deg,rgb(0,89,0) 67.86deg,rgb(0,90,0) 67.90deg,rgb(0,90,0) 67.94deg,rgb(0,91,0) 67.98deg,rgb(0,92,0) 68.03deg,rgb(0,92,0) 68.07deg,rgb(0,93,0) 68.11deg,rgb(0,93,0) 68.15deg,rgb(0,94,0) 68.20deg,rgb(0,95,0) 68.24deg,rgb(0,95,0) 68.28deg,rgb(0,96,0) 68.33deg,rgb(0,96,0) 68.37deg,rgb(0,97,0) 68.41deg,rgb(0,98,0) 68.45deg,rgb(0,98,0) 68.50deg,rgb(0,99,0) 68.54deg,rgb(0,99,0) 68.58deg,rgb(0,100,0) 68.63deg,rgb(0,101,0) 68.67deg,rgb(0,101,0) 68.71deg,rgb(0,102,0) 68.76deg,rgb(0,103,0) 68.80deg,rgb(0,103,0) 68.84deg,rgb(0,104,0) 68.89deg,rgb(0,104,0) 68.93deg,rgb(0,105,0) 68.97deg,rgb(0,106,0) 69.02deg,rgb(0,106,0) 69.06deg,rgb(0,107,0) 69.10deg,rgb(0,108,0) 69.15deg,rgb(0,108,0) 69.19deg,rgb(0,109,0) 69.24deg,rgb(0,110,0) 69.28deg,rgb(0,110,0) 69.32deg,rgb(0,111,0) 69.37deg,rgb(0,112,0) 69.41deg,rgb(0,112,0) 69.46deg,rgb(0,113,0) 69.50deg,rgb(0,114,0) 69.54deg,rgb(0,114,0) 69.59deg,rgb(0,115,0) 69.63deg,rgb(0,116,0) 69.68deg,rgb(0,116,0) 69.72deg,rgb(0,117,0) 69.77deg,rgb(0,118,0) 69.81deg,rgb(0,118,0) 69.85deg,rgb(0,119,0) 69.90deg,rgb(0,120,0) 69.94deg,rgb(0,120,0) 69.99deg,rgb(0,121,0) 70.03deg,rgb(0,122,0) 70.08deg,rgb(0,122,0) 70.12deg,rgb(0,123,0) 70.17deg,rgb(0,124,0) 70.21deg,rgb(0,124,0) 70.26deg,rgb(0,125,0) 70.30deg,rgb(0,126,0) 70.35deg,rgb(0,127,0) 70.39deg,rgb(0,127,0) 70.44deg,rgb(0,128,0) 70.48deg,rgb(0,129,0) 70.53deg,rgb(0,129,0) 70.57deg,rgb(0,130,0) 70.62deg,rgb(0,131,0) 70.66deg,rgb(0,132,0) 70.71deg,rgb(0,132,0) 70.75deg,rgb(0,133,0) 70.80deg,rgb(0,134,0) 70.85deg,rgb(0,135,0) 70.89deg,rgb(0,135,0) 70.94deg,rgb(0,136,0) 70.98deg,rgb(0,137,0) 71.03deg,rgb(0,138,0) 71.07deg,rgb(0,138,0) 71.12deg,rgb(0,139,0) 71.16deg,rgb(0,140,0) 71.21deg,rgb(0,141,0) 71.26deg,rgb(0,141,0) 71.30deg,rgb(0,142,0) 71.35deg,rgb(0,143,0) 71.39deg,rgb(0,144,0) 71.44deg,rgb(0,145,0) 71.49deg,rgb(0,145,0) 71.53deg,rgb(0,146,0) 71.58deg,rgb(0,147,0) 71.63deg,rgb(0,148,0) 71.67deg,rgb(0,148,0) 71.72deg,rgb(0,149,0) 71.76deg,rgb(0,150,0) 71.81deg,rgb(0,151,0) 71.86deg,rgb(0,152,0) 71.90deg,rgb(0,152,0) 71.95deg,rgb(0,153,0) 72.00deg,rgb(0,154,0) 72.04deg,rgb(0,155,0) 72.09deg,rgb(0,156,0) 72.14deg,rgb(0,157,0) 72.18deg,rgb(0,157,0) 72.23deg,rgb(0,158,0) 72.28deg,rgb(0,159,0) 72.33deg,rgb(0,160,0) 72.37deg,rgb(0,161,0) 72.42deg,rgb(0,162,0) 72.47deg,rgb(0,162,0) 72.51deg,rgb(0,163,0) 72.56deg,rgb(0,164,0) 72.61deg,rgb(0,165,0) 72.66deg,rgb(0,166,0) 72.70deg,rgb(0,167,0) 72.75deg,rgb(0,168,0) 72.80deg,rgb(0,168,0) 72.85deg,rgb(0,169,0) 72.89deg,rgb(0,170,0) 72.94deg,rgb(0,171,0) 72.99deg,rgb(0,172,0) 73.04deg,rgb(0,173,0) 73.08deg,rgb(0,174,0) 73.13deg,rgb(0,175,0) 73.18deg,rgb(0,176,0) 73.23deg,rgb(0,177,0) 73.28deg,rgb(0,177,0) 73.32deg,rgb(0,178,0) 73.37deg,rgb(0,179,0) 73.42deg,rgb(0,180,0) 73.47deg,rgb(0,181,0) 73.52deg,rgb(0,182,0) 73.56deg,rgb(0,183,0) 73.61deg,rgb(0,184,0) 73.66deg,rgb(0,185,0) 73.71deg,rgb(0,186,0) 73.76deg,rgb(0,187,0) 73.81deg,rgb(0,188,0) 73.85deg,rgb(0,189,0) 73.90deg,rgb(0,190,0) 73.95deg,rgb(0,191,0) 74.00deg,rgb(0,192,0) 74.05deg,rgb(0,193,0) 74.10deg,rgb(0,194,0) 74.15deg,rgb(0,195,0) 74.20deg,rgb(0,196,0) 74.24deg,rgb(0,197,0) 74.29deg,rgb(0,198,0) 74.34deg,rgb(0,199,0) 74.39deg,rgb(0,200,0) 74.44deg,rgb(0,201,0) 74.49deg,rgb(0,202,0) 74.54deg,rgb(0,203,0) 74.59deg,rgb(0,204,0) 74.64deg,rgb(0,205,0) 74.69deg,rgb(0,206,0) 74.74deg,rgb(0,207,0) 74.78deg,rgb(0,208,0) 74.83deg,rgb(0,209,0) 74.88deg,rgb(0,210,0) 74.93deg,rgb(0,211,0) 74.98deg,rgb(0,212,0) 75.03deg,rgb(0,213,0) 75.08deg,rgb(0,214,0) 75.13deg,rgb(0,215,0) 75.18deg,rgb(0,216,0) 75.23deg,rgb(0,217,0) 75.28deg,rgb(0,218,0) 75.33deg,rgb(0,220,0) 75.38deg,rgb(0,221,0) 75.43deg,rgb(0,222,0) 75.48deg,rgb(0,223,0) 75.53deg,rgb(0,224,0) 75.58deg,rgb(0,225,0) 75.63deg,rgb(0,226,0) 75.68deg,rgb(0,227,0) 75.73deg,rgb(0,229,0) 75.78deg,rgb(0,230,0) 75.83deg,rgb(0,231,0) 75.88deg,rgb(0,232,0) 75.93deg,rgb(0,233,0) 75.98deg,rgb(0,234,0) 76.03deg,rgb(0,235,0) 76.09deg,rgb(0,237,0) 76.14deg,rgb(0,238,0) 76.19deg,rgb(0,239,0) 76.24deg,rgb(0,240,0) 76.29deg,rgb(0,241,0) 76.34deg,rgb(0,243,0) 76.39deg,rgb(0,244,0) 76.44deg,rgb(0,245,0) 76.49deg,rgb(0,246,0) 76.54deg,rgb(0,247,0) 76.59deg,rgb(0,249,0) 76.64deg,rgb(0,250,0) 76.70deg,rgb(0,251,0) 76.75deg,rgb(0,252,0) 76.80deg,rgb(0,254,0) 76.85deg,rgb(0,255,0) 76.90deg) #000;background-blend-mode:lighten"></div></div></div>
<svg width="2209" height="1293" viewBox="0 0 2209 1293">
<rect x="1351" y="44" width="848" height="653" fill="none" stroke="#929292" stroke-width="2.2"/>
<rect x="1978.2" y="118.1" width="17.6" height="17.6" fill="none" stroke="#fff" stroke-width="2.0"/>
<rect x="1517.3" y="75.1" width="17.6" height="17.6" fill="none" stroke="#fff" stroke-width="2.0"/>
<rect x="1589.7" y="516.2" width="17.6" height="17.6" fill="none" stroke="#fff" stroke-width="2.0"/>
<rect x="1537.2" y="192.7" width="17.6" height="17.6" fill="none" stroke="#fff" stroke-width="2.0"/>
<rect x="1772.2" y="327.9" width="17.6" height="17.6" fill="none" stroke="#fff" stroke-width="2.0"/>
<rect x="1629.3" y="86.0" width="17.6" height="17.6" fill="none" stroke="#fff" stroke-width="2.0"/>
<rect x="1620.8" y="178.8" width="16.9" height="16.9" fill="none" stroke="#000" stroke-width="2.6"/>
<circle cx="1985.0" cy="127.2" r="5.5" fill="#b40500" stroke="#000" stroke-width="1.7"/>
<circle cx="1508.1" cy="74.9" r="5.5" fill="#00be0a" stroke="#000" stroke-width="1.7"/>
<circle cx="1595.0" cy="525.5" r="5.5" fill="#0010b8" stroke="#000" stroke-width="1.7"/>
<circle cx="1524.3" cy="203.4" r="5.5" fill="#00b9b9" stroke="#000" stroke-width="1.7"/>
<circle cx="1779.6" cy="338.1" r="5.5" fill="#b805b8" stroke="#000" stroke-width="1.7"/>
<circle cx="1634.4" cy="87.4" r="5.5" fill="#beb900" stroke="#000" stroke-width="1.7"/>
<circle cx="1624.9" cy="188.4" r="5.5" fill="#fff" stroke="#000" stroke-width="1.7"/>
<text transform="scale(0.9656 1)" x="2020.2 2037.0 2048.9 2066.8 2078.8 2084.8 2090.0 2100.4 2112.0 2122.3 2133.9 2140.8 2152.3 2163.9 2175.4" y="79.9" font-size="20.98" fill="#f0f0f0">Gamut coverage:</text>
<rect x="2116" y="51.5" width="77" height="32.5" fill="url(#dd)" stroke="#2a2a2a" stroke-width="1"/>
<text transform="scale(1.0577 1)" x="2004.0 2016.7 2021.1 2032.5" y="78.2" font-size="22.85" fill="#f0f0f0">u'v'</text>
<path d="M2173.6 65.3h13l-6.5 6.5z" fill="#000"/>
<rect x="1861.00" y="654.40" width="334.00" height="36.00" fill="#333333"/>
<text transform="scale(0.9836 1)" x="1892.3 1913.9 1929.3 1952.4 1967.9 1975.6 1982.4 2001.4 2016.0 2029.2 2043.8 2052.5 2067.2 2081.8 2096.4 2103.7 2110.5 2117.3 2132.0 2146.7 2154.0 2168.7" y="682.6" font-size="26.58" fill="#f4f4f4" xml:space="preserve">Gamut Coverage:  98.9%</text>
<path d="M1059.1 905.2H1080.9V924.9H1059.1ZM1062.5 907.7V922.4H1077.5V907.7Z" fill="#000" fill-rule="evenodd"/><rect x="1062.5" y="907.7" width="15" height="14.7" fill="#fff" fill-opacity="0.8"/>
<circle cx="1003.9" cy="922.1" r="5.3" fill="#bebebe" stroke="#000" stroke-width="1.7"/>
<circle cx="1013.1" cy="931.0" r="5.3" fill="#fff" stroke="#000" stroke-width="1.7"/>
<rect x="1822" y="1229.5" width="400" height="40.8" fill="#fff" fill-opacity="0.09"/>
<g stroke-linejoin="round" stroke-linecap="round">
<path d="M1873.3 1221.6L1825.5 1212.6L1827.3 1260.4L1856.8 1275.5L1911.4 1258.6" fill="none" stroke="#dcdcdc" stroke-opacity="0.75" stroke-width="6.8"/>
<path d="M1873.3 1221.6L1875.8 1250.6L1837 1255.2M1911.4 1258.6L1881.5 1253.2" fill="none" stroke="#dcdcdc" stroke-opacity="0.75" stroke-width="4.8"/>
<path d="M1873.3 1221.6L1825.5 1212.6L1827.3 1260.4L1856.8 1275.5L1911.4 1258.6" fill="none" stroke="rgb(112,30,36)" stroke-opacity="0.88" stroke-width="4.3"/>
<path d="M1873.3 1221.6L1875.8 1250.6L1837 1255.2M1911.4 1258.6L1881.5 1253.2" fill="none" stroke="rgb(112,30,36)" stroke-opacity="0.88" stroke-width="2.2"/>
<path d="M1837.7 1228.4Q1841 1224.6 1845.3 1224.5Q1850.5 1228.5 1855.7 1234.9Q1868 1219 1881.2 1209L1882.3 1211.5Q1870 1225.5 1860.4 1242.4Q1857 1245 1853.2 1248.3Q1848 1238 1843.8 1232.4Q1841 1229.5 1837.7 1228.4Z" fill="rgb(40,36,38)" fill-opacity="0.8" stroke="#dcdcdc" stroke-opacity="0.7" stroke-width="1.3"/>
<mask id="wm1" maskUnits="userSpaceOnUse" x="1870" y="1210" width="340" height="50"><rect x="1870" y="1210" width="340" height="50" fill="#fff"/><text x="1883.5" y="1248.4" font-size="34.5" font-weight="bold" textLength="194.5" lengthAdjust="spacingAndGlyphs" fill="#000" stroke="#000" stroke-width="1.8">NOTEBOOK</text></mask>
<text x="1883.5" y="1248.4" font-size="34.5" font-weight="bold" textLength="194.5" lengthAdjust="spacingAndGlyphs" fill="none" stroke="#dcdcdc" stroke-width="4.8" stroke-opacity="0.85" mask="url(#wm1)">NOTEBOOK</text>
<g opacity="0.43"><text x="1883.5" y="1248.4" font-size="34.5" font-weight="bold" textLength="194.5" lengthAdjust="spacingAndGlyphs" fill="rgb(212,26,40)" stroke="rgb(212,26,40)" stroke-width="1.8">NOTEBOOK</text></g>
<mask id="wm2" maskUnits="userSpaceOnUse" x="1870" y="1210" width="340" height="50"><rect x="1870" y="1210" width="340" height="50" fill="#fff"/><text x="2080.3" y="1248.4" font-size="34.5" textLength="117.5" lengthAdjust="spacingAndGlyphs" fill="#000" stroke="#000" stroke-width="0.6">CHECK</text></mask>
<text x="2080.3" y="1248.4" font-size="34.5" textLength="117.5" lengthAdjust="spacingAndGlyphs" fill="none" stroke="#dcdcdc" stroke-width="3.6" stroke-opacity="0.85" mask="url(#wm2)">CHECK</text>
<g opacity="0.66"><text x="2080.3" y="1248.4" font-size="34.5" textLength="117.5" lengthAdjust="spacingAndGlyphs" fill="rgb(24,22,23)" stroke="rgb(24,22,23)" stroke-width="0.6">CHECK</text></g>
<path d="M2187.8 1243.9L2187.8 1231.1M2187.8 1243.9L2198.9 1237.5M2187.8 1243.9L2198.9 1250.3M2187.8 1243.9L2187.8 1256.7M2187.8 1243.9L2176.7 1250.3M2187.8 1243.9L2176.7 1237.5" stroke="#e00808" stroke-opacity="0.9" stroke-width="5" stroke-linecap="butt" transform="rotate(-3 2187.8 1243.9)"/>
</g>
</svg>
</body></html>
